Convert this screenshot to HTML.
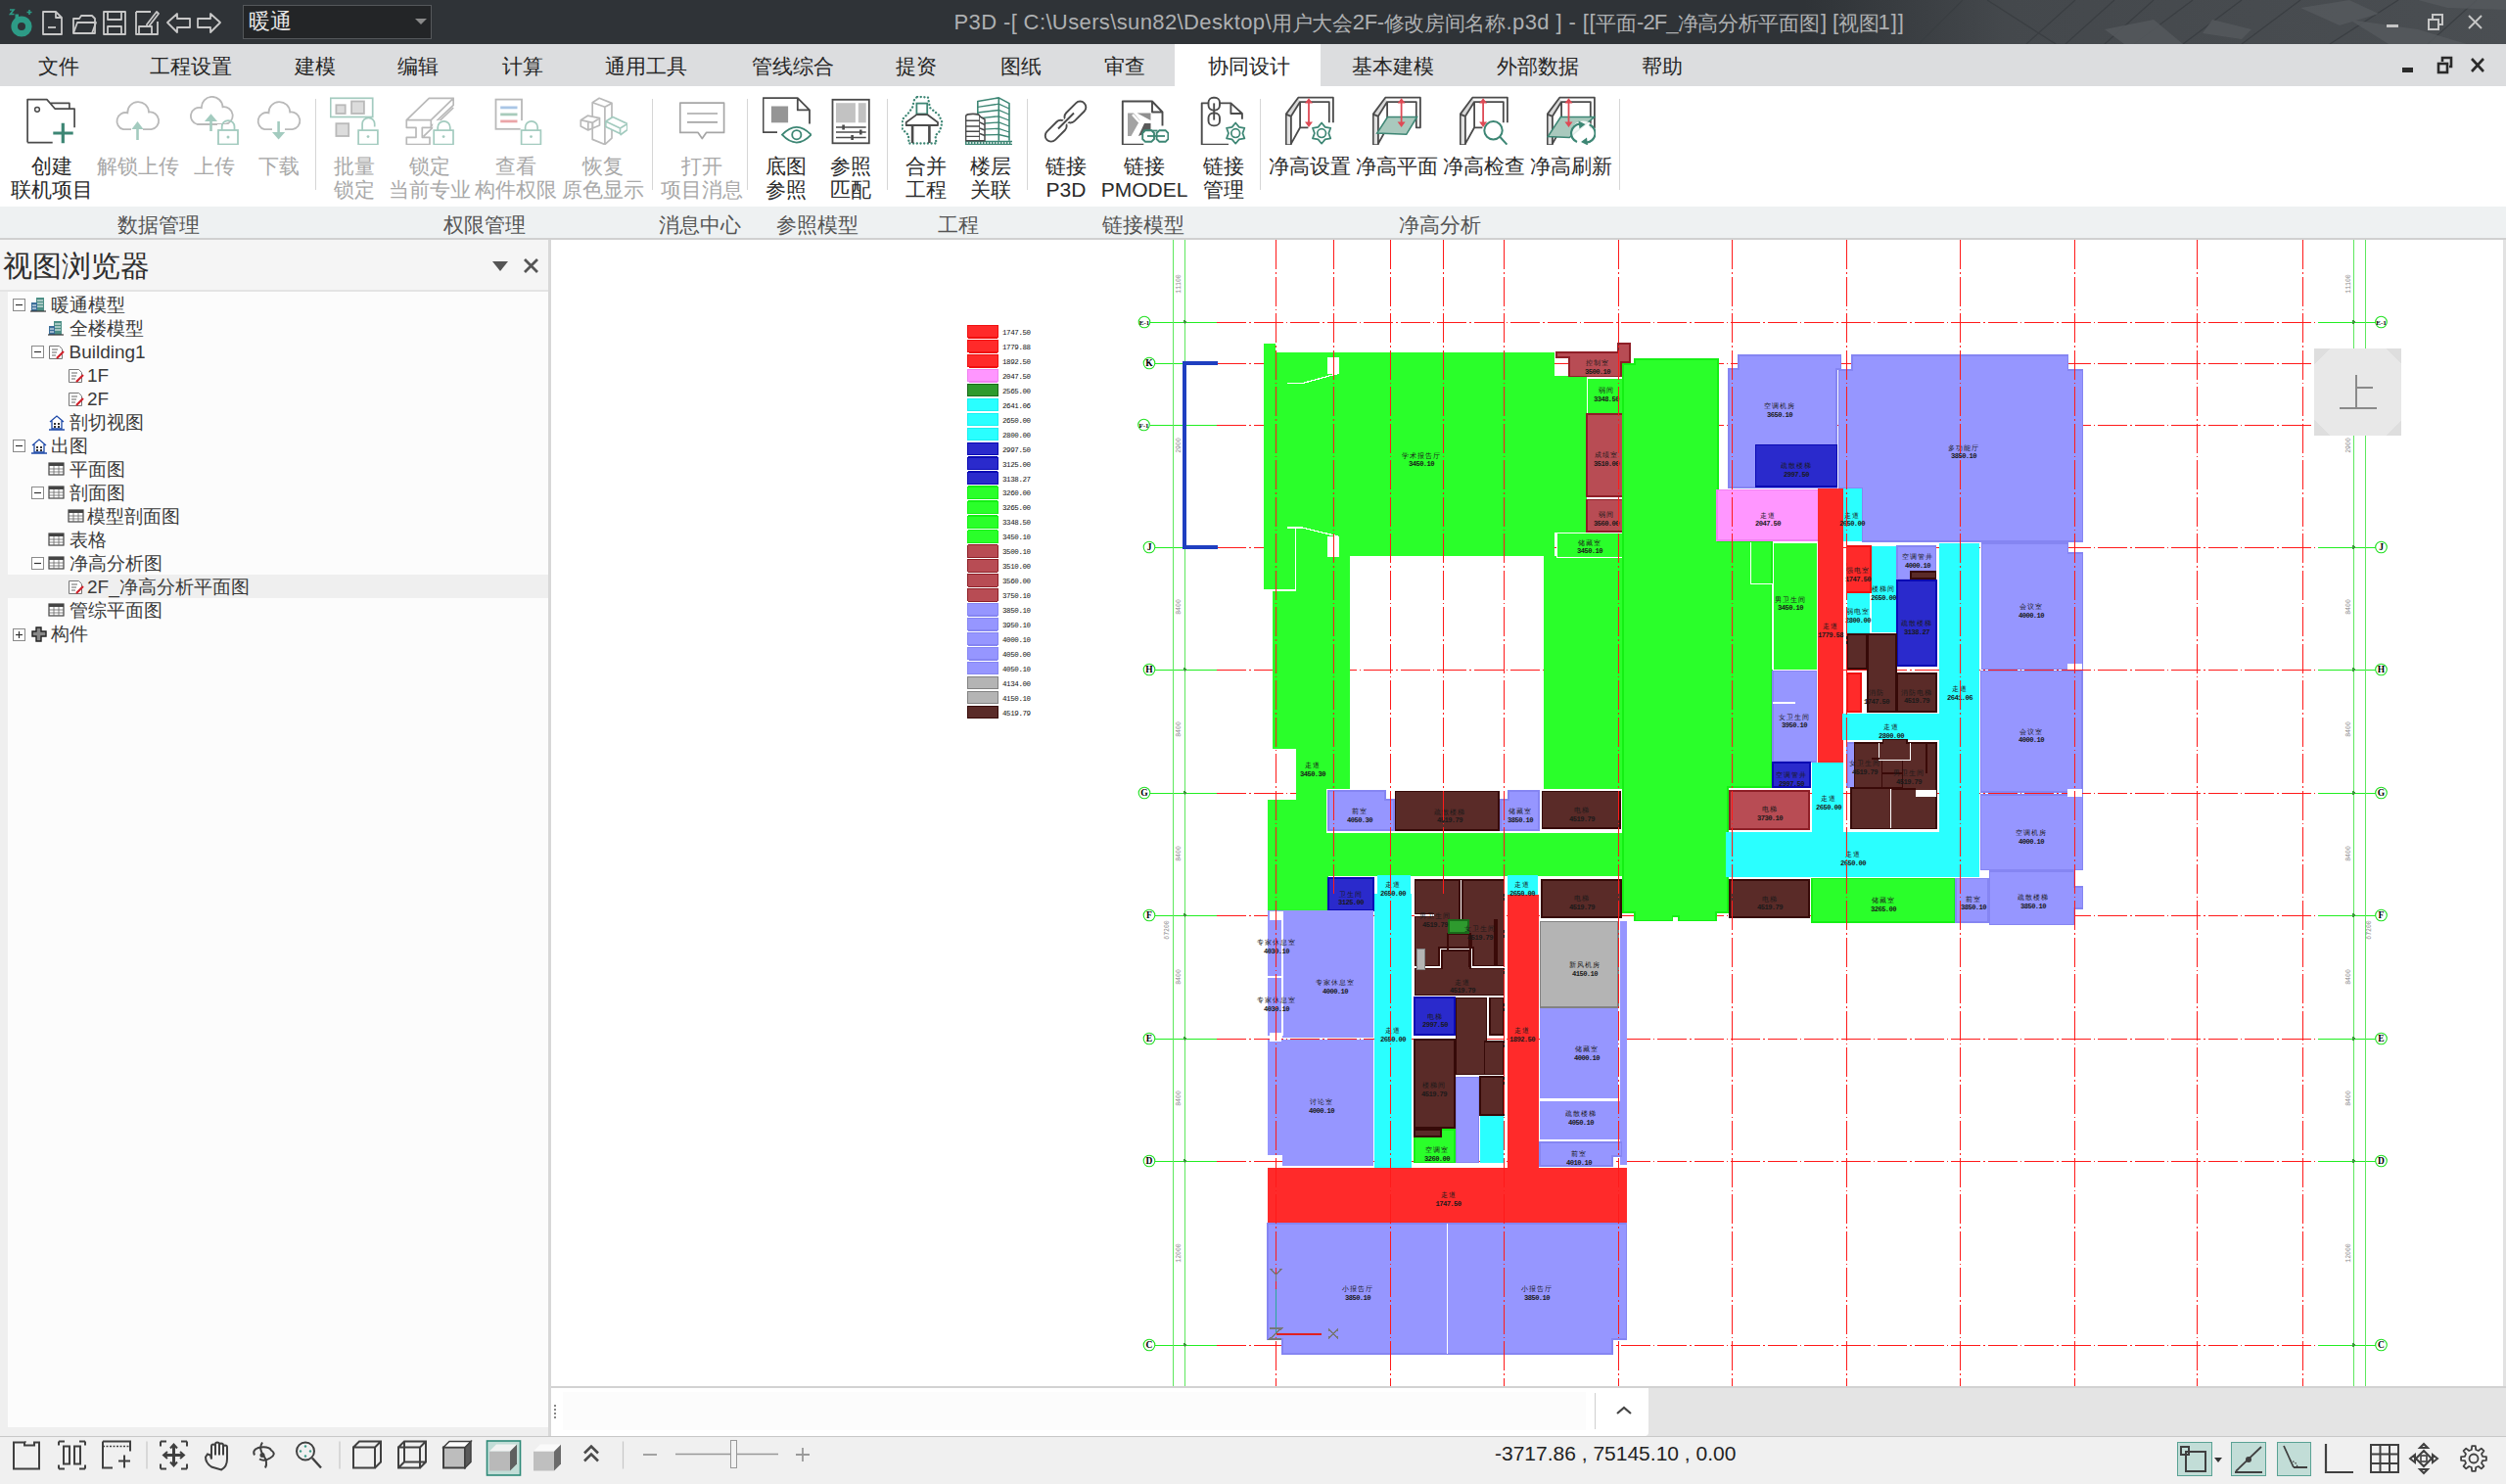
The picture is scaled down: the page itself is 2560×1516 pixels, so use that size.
<!DOCTYPE html><html><head><meta charset="utf-8"><style>
*{margin:0;padding:0;box-sizing:border-box}
html,body{width:2560px;height:1516px;overflow:hidden;background:#fff;font-family:"Liberation Sans",sans-serif}
.abs{position:absolute}
#title{left:0;top:0;width:2560px;height:45px;background:#2f3337;overflow:hidden}
#menu{left:0;top:45px;width:2560px;height:43px;background:#dcdddf}
.mi{position:absolute;top:1px;height:43px;line-height:43px;font-size:21px;color:#262626;white-space:nowrap}
#ribbon{left:0;top:88px;width:2560px;height:123px;background:#fff}
#glabels{left:0;top:211px;width:2560px;height:34px;background:#eef1f2;border-bottom:2px solid #d0d0d0}
.gl{position:absolute;top:7px;font-size:21px;line-height:24px;color:#555;white-space:nowrap}
.rb{position:absolute;top:70px;font-size:21px;line-height:24px;color:#2b2b2b;text-align:center;white-space:nowrap}
.rb.dis{color:#a9a9a9}
.ico{position:absolute;top:10px}
.sep{position:absolute;top:13px;width:1px;height:93px;background:#d6d6d6}
#left{left:0;top:245px;width:560px;height:1223px;background:#efefef}
#lhead{left:0;top:0;width:560px;height:53px;background:#f5f5f5;border-bottom:2px solid #e4e4e4}
#tree{left:8px;top:53px;width:552px;height:1160px;background:#fcfcfc}
.tr{position:absolute;height:24px;line-height:24px;font-size:19px;color:#3a3a3a;white-space:nowrap}
#split{left:560px;top:245px;width:3px;height:1223px;background:#d8d8d8}
#canvas{left:563px;top:245px;width:1995px;height:1171px;background:#fff;overflow:hidden}
#cmd{left:563px;top:1416px;width:1997px;height:52px;background:#e6e6e6;border-top:2px solid #d0d0d0}
#status{left:0;top:1467px;width:2560px;height:49px;background:#f0f0f0;border-top:1px solid #c8c8c8}
.st{position:absolute;top:4px}
</style></head><body>
<div id="title" class="abs">
<svg class="abs" style="left:0;top:0" width="2560" height="45" viewBox="0 0 2560 45">
<defs><linearGradient id="tg" x1="0" x2="1" y1="0" y2="0">
<stop offset="0" stop-color="#2f3337"/><stop offset="0.72" stop-color="#2f3337"/><stop offset="0.8" stop-color="#44484c"/><stop offset="1" stop-color="#4a4e52"/></linearGradient></defs>
<rect x="0" y="0" width="2560" height="45" fill="url(#tg)"/>
<g stroke="#3a3e42" stroke-width="1.2" fill="none">
<line x1="2005" y1="0" x2="1960" y2="45"/><line x1="2030" y1="0" x2="2100" y2="45"/>
<line x1="2120" y1="0" x2="2070" y2="45"/><line x1="2160" y1="0" x2="2110" y2="45"/>
<line x1="2200" y1="0" x2="2150" y2="45"/><line x1="2240" y1="0" x2="2180" y2="45"/>
<line x1="2290" y1="0" x2="2230" y2="45"/><line x1="2350" y1="0" x2="2290" y2="45"/>
<line x1="2450" y1="0" x2="2380" y2="45"/><line x1="2530" y1="0" x2="2480" y2="45"/>
</g>
<g fill="#55595d" opacity="0.85">
<polygon points="2350,8 2400,0 2430,14 2390,26"/><polygon points="2400,20 2470,30 2520,45 2440,45"/>
<polygon points="2260,20 2300,30 2290,40 2250,34"/><polygon points="2470,0 2560,0 2560,10 2500,8"/>
<polygon points="2150,30 2200,20 2230,45 2170,45"/>
</g>
<g fill="#c6c6c6">
<rect x="2438" y="25" width="12" height="3"/>
</g>
<g stroke="#c6c6c6" stroke-width="2" fill="none">
<rect x="2481" y="20" width="10" height="10"/><polyline points="2485,19 2485,15 2495,15 2495,25 2492,25"/>
<line x1="2522" y1="16" x2="2535" y2="29"/><line x1="2535" y1="16" x2="2522" y2="29"/>
</g>
</svg>
<svg class="abs" style="left:0;top:0" width="240" height="45" viewBox="0 0 240 45">
<circle cx="22" cy="27" r="7.3" fill="none" stroke="#2d9b86" stroke-width="6.6"/>
<rect x="15.5" y="14.5" width="3.5" height="5" fill="#2d9b86"/>
<path d="M10 10h4l-3.5 4.5h4" fill="none" stroke="#2d9b86" stroke-width="1.6"/>
<path d="M27.5 12.5h5M30 10v5" stroke="#2d9b86" stroke-width="1.6"/>
<g stroke="#c8c8c8" stroke-width="1.8" fill="none" stroke-linejoin="round">
<path d="M44 12h13l6 6v17H44z"/><path d="M57 12v6h6"/><path d="M49 28h8"/>
<path d="M75 19h6l2-3h11l3 3v15H75z"/><path d="M75 34l4-11h19l-4 11"/>
<rect x="106" y="12" width="22" height="23"/><rect x="110" y="12" width="14" height="8"/><rect x="110" y="27" width="14" height="8"/>
<path d="M139 12h15M139 12v23h22V22"/><rect x="142" y="27" width="13" height="8"/><path d="M150 25l10-13 2 2-10 13h-2z"/>
<path d="M171 23l10-9v5h13v9h-13v5z"/>
<path d="M225 23l-10-9v5h-13v9h13v5z"/>
</g></svg>
<div class="abs" style="left:248px;top:5px;width:193px;height:35px;background:#232527;border:1px solid #55585b"></div>
<div class="abs" style="left:254px;top:7px;font-size:22px;line-height:30px;color:#e8e8e8">暖通</div>
<svg class="abs" style="left:424px;top:19px" width="12" height="8"><polygon points="0,0 12,0 6,6" fill="#8a8a8a"/></svg>
<div class="abs" style="left:974.5px;top:9px;font-size:22px;line-height:28px;color:#aeb0b2;white-space:pre;letter-spacing:0.38px">P3D -[ C:\Users\sun82\Desktop\</div>
<div class="abs" style="left:1299px;top:9.5px;font-size:21px;line-height:28px;color:#aeb0b2;white-space:pre;letter-spacing:-0.3px">用户大会</div>
<div class="abs" style="left:1381.8px;top:9px;font-size:22px;line-height:28px;color:#aeb0b2;white-space:pre;letter-spacing:-0.4px">2F-</div>
<div class="abs" style="left:1413.6px;top:9.5px;font-size:21px;line-height:28px;color:#aeb0b2;white-space:pre;letter-spacing:-0.3px">修改房间名称</div>
<div class="abs" style="left:1538.5px;top:9px;font-size:22px;line-height:28px;color:#aeb0b2;white-space:pre;letter-spacing:0.42px">.p3d ] - [[</div>
<div class="abs" style="left:1630px;top:9.5px;font-size:21px;line-height:28px;color:#aeb0b2;white-space:pre;letter-spacing:-0.3px">平面</div>
<div class="abs" style="left:1672px;top:9px;font-size:22px;line-height:28px;color:#aeb0b2;white-space:pre;letter-spacing:-0.9px">-2F_</div>
<div class="abs" style="left:1713.6px;top:9.5px;font-size:21px;line-height:28px;color:#aeb0b2;white-space:pre;letter-spacing:-0.3px">净高分析平面图</div>
<div class="abs" style="left:1860px;top:9px;font-size:22px;line-height:28px;color:#aeb0b2;white-space:pre;letter-spacing:-0.1px">] [</div>
<div class="abs" style="left:1878px;top:9.5px;font-size:21px;line-height:28px;color:#aeb0b2;white-space:pre;letter-spacing:-0.3px">视图</div>
<div class="abs" style="left:1918.5px;top:9px;font-size:22px;line-height:28px;color:#aeb0b2;white-space:pre;letter-spacing:1.0px">1]]</div>
</div>
<div id="menu" class="abs">
<div class="abs" style="left:1200px;top:0;width:149px;height:43px;background:#fff"></div>
<div class="mi" style="left:39px">文件</div>
<div class="mi" style="left:153px">工程设置</div>
<div class="mi" style="left:301px">建模</div>
<div class="mi" style="left:406px">编辑</div>
<div class="mi" style="left:513px">计算</div>
<div class="mi" style="left:618px">通用工具</div>
<div class="mi" style="left:768px">管线综合</div>
<div class="mi" style="left:915px">提资</div>
<div class="mi" style="left:1022px">图纸</div>
<div class="mi" style="left:1128px">审查</div>
<div class="mi" style="left:1234px">协同设计</div>
<div class="mi" style="left:1381px">基本建模</div>
<div class="mi" style="left:1529px">外部数据</div>
<div class="mi" style="left:1677px">帮助</div>
<svg class="abs" style="left:2440px;top:0" width="120" height="43">
<rect x="14" y="24" width="11" height="5" fill="#2a2a2a"/>
<g stroke="#2a2a2a" stroke-width="2.6" fill="none"><rect x="51" y="20" width="9" height="9"/><polyline points="55,18 55,14 64,14 64,23 62,23"/>
<line x1="85" y1="15" x2="97" y2="28"/><line x1="97" y1="15" x2="85" y2="28"/></g></svg>
</div>
<div id="ribbon" class="abs">
<svg class="ico" style="left:27px" width="50" height="50" viewBox="0 0 50 50"><path d="M1.1 47.6V3.6H20.9L29.3 13.2H49.1V32.3M1.1 47.6H26.7M24.8 7.4H43.9V12.5" fill="none" stroke="#4b4b4b" stroke-width="1.7" stroke-linejoin="round"/><circle cx="11" cy="13.8" r="2.4" fill="none" stroke="#4b4b4b" stroke-width="1.5"/><path d="M27.3 38H47.7M37.3 27.8V48.3" stroke="#3d8674" stroke-width="3.2"/></svg>
<svg class="ico" style="left:115px" width="50" height="50" viewBox="0 0 50 50"><path transform="translate(0,0)" d="M11 34.2A8.6 8.6 0 0 1 15.3 17.3A10.8 10.8 0 0 1 37 16.5A8.8 8.8 0 0 1 39.5 34.2Z" fill="none" stroke="#b9b9b9" stroke-width="1.8"/><rect x="19" y="33" width="12" height="3" fill="#fff"/><path d="M25.5 45V32" stroke="#a3cbbf" stroke-width="2.6"/><path d="M19.5 34L25.5 26L31.5 34z" fill="#a3cbbf"/></svg>
<svg class="ico" style="left:194px" width="50" height="50" viewBox="0 0 50 50"><path transform="translate(-3.5,-5.2)" d="M11 34.2A8.6 8.6 0 0 1 15.3 17.3A10.8 10.8 0 0 1 37 16.5A8.8 8.8 0 0 1 39.5 34.2Z" fill="none" stroke="#b9b9b9" stroke-width="1.8"/><path d="M21.5 36V24" stroke="#a3cbbf" stroke-width="2.6"/><path d="M15 26L21.5 18.3L28 26z" fill="#a3cbbf"/><rect x="28" y="29" width="22" height="21" fill="#fff"/><rect x="29" y="35" width="20" height="14.5" fill="none" stroke="#a3cbbf" stroke-width="1.8"/><path d="M32.7 35v-3.5a6.4 6.4 0 0 1 12.8 0v3.5" fill="none" stroke="#a3cbbf" stroke-width="1.8"/><circle cx="39" cy="42" r="1.5" fill="#a3cbbf"/></svg>
<svg class="ico" style="left:260.4px" width="50" height="50" viewBox="0 0 50 50"><path transform="translate(-0.8,0)" d="M11 34.2A8.6 8.6 0 0 1 15.3 17.3A10.8 10.8 0 0 1 37 16.5A8.8 8.8 0 0 1 39.5 34.2Z" fill="none" stroke="#b9b9b9" stroke-width="1.8"/><rect x="18" y="33" width="13" height="3" fill="#fff"/><path d="M24.6 26V38" stroke="#a3cbbf" stroke-width="2.6"/><path d="M18 37L24.6 44.4L31.2 37z" fill="#a3cbbf"/></svg>
<svg class="ico" style="left:337px" width="50" height="50" viewBox="0 0 50 50"><rect x="0.7" y="2.3" width="43" height="19.2" fill="none" stroke="#a3cbbf" stroke-width="1.7"/><rect x="6.4" y="9.3" width="9.3" height="8.7" fill="#dcdcdc" stroke="#b9b9b9" stroke-width="1.8"/><rect x="22.1" y="5.5" width="12.8" height="12.5" fill="#dcdcdc" stroke="#b9b9b9" stroke-width="1.8"/><rect x="6.4" y="28.2" width="12.8" height="12.8" fill="#dcdcdc" stroke="#b9b9b9" stroke-width="1.8"/><rect x="28.1" y="25.1" width="22" height="25" fill="#fff"/><rect x="29.1" y="35.1" width="19.8" height="14.5" fill="#fff" stroke="#a3cbbf" stroke-width="1.7"/><path d="M33.1 35.1v-6.5a6.3 6.3 0 0 1 12.6 0v3" fill="none" stroke="#a3cbbf" stroke-width="1.7"/><circle cx="39.0" cy="41.6" r="1.4" fill="#a3cbbf"/></svg>
<svg class="ico" style="left:413.6px" width="50" height="50" viewBox="0 0 50 50"><path d="M1.3 24.7L24.3 2.3H49.2L26.3 24.7z M26.3 24.7L49.2 2.3V9.3L26.3 31z M1.3 24.7H26.3V32.3H17.3V42.3H25V49.6H1.3V42.3H11V32.3H1.3z M18.6 41.3L49.2 12" fill="#fff" stroke="#b9b9b9" stroke-width="1.7" stroke-linejoin="round"/><rect x="28.2" y="25.1" width="22" height="25" fill="#fff"/><rect x="29.2" y="35.1" width="19.8" height="14.5" fill="#fff" stroke="#a3cbbf" stroke-width="1.7"/><path d="M33.2 35.1v-3a6.3 6.3 0 0 1 12.6 0v3" fill="none" stroke="#a3cbbf" stroke-width="1.7"/><circle cx="39.1" cy="41.6" r="1.4" fill="#a3cbbf"/></svg>
<svg class="ico" style="left:503.5px" width="50" height="50" viewBox="0 0 50 50"><rect x="2.5" y="3.6" width="26.5" height="30.2" fill="none" stroke="#b9b9b9" stroke-width="1.8"/><path d="M7.2 11.9h17.3" stroke="#a9c6e6" stroke-width="2.8"/><path d="M7.2 18.9h17.3" stroke="#a8cbbb" stroke-width="2.8"/><path d="M7.2 25.9h17.3" stroke="#eba5a8" stroke-width="2.8"/><rect x="27.6" y="25.1" width="22" height="25" fill="#fff"/><rect x="28.6" y="35.1" width="19.8" height="14.5" fill="#fff" stroke="#a3cbbf" stroke-width="1.7"/><path d="M32.6 35.1v-3a6.3 6.3 0 0 1 12.6 0v3" fill="none" stroke="#a3cbbf" stroke-width="1.7"/><circle cx="38.5" cy="41.6" r="1.4" fill="#a3cbbf"/></svg>
<svg class="ico" style="left:591px" width="50" height="50" viewBox="0 0 50 50"><path d="M14.2 6.8L21.2 2.3L34 7.4L26.9 11.2z M14.2 6.8V44.4L26.9 49.6V11.2 M34 7.4V43.2L26.9 49.6" fill="#fff" stroke="#b9b9b9" stroke-width="1.7" stroke-linejoin="round"/><path d="M2.3 24.7L9.3 20.2L21.5 22.7L14.5 27.3z M2.3 24.7V31L9.8 34.9V27.3 M14.5 27.3V33L21.5 30V22.7 M9.8 34.9L14.5 33" fill="#fff" stroke="#b9b9b9" stroke-width="1.7" stroke-linejoin="round"/><path d="M27.8 26L35 21.5L49.9 28.5L42.5 33z M27.8 26V31.5L42.5 38.5V33 M49.9 28.5V34.5L42.5 40" fill="#fff" stroke="#a3cbbf" stroke-width="1.7" stroke-linejoin="round"/></svg>
<svg class="ico" style="left:691.6px" width="50" height="50" viewBox="0 0 50 50"><path d="M2.8 7.2H47.6V37.4H29.5L25.3 43.6L21.1 37.4H2.8z" fill="none" stroke="#a6a6a6" stroke-width="1.7" stroke-linejoin="round"/><path d="M10 18H41M10 26.8H41" stroke="#a6a6a6" stroke-width="1.7"/></svg>
<svg class="ico" style="left:778.5px" width="50" height="50" viewBox="0 0 50 50"><path d="M15 37.1H0.6V2.2H35.8L48 14.4V28.5M35.8 2.2V14.4H48" fill="none" stroke="#4b4b4b" stroke-width="1.8" stroke-linejoin="round"/><rect x="8.9" y="10.5" width="17.2" height="16.8" fill="#959595"/><path d="M20 39.7Q34.8 24 49.6 39.7Q34.8 55.4 20 39.7z" fill="#fff" stroke="#3d8674" stroke-width="1.8"/><circle cx="34.8" cy="39.7" r="4.6" fill="none" stroke="#3d8674" stroke-width="1.8"/></svg>
<svg class="ico" style="left:846.5px" width="50" height="50" viewBox="0 0 50 50"><rect x="3.5" y="3.8" width="37.3" height="44.5" fill="none" stroke="#4b4b4b" stroke-width="1.8"/><rect x="7" y="7.2" width="19.9" height="20.1" fill="#c2c2c2"/><rect x="29.8" y="7.2" width="7.9" height="20.1" fill="#c2c2c2"/><path d="M7 32H37.7M7 37.1H37.7M7 42.6H37.7" stroke="#4b4b4b" stroke-width="1.5"/><path d="M14.6 29.5v5M32.3 34.6v5M23.6 40.1v5" stroke="#4b4b4b" stroke-width="2.6"/></svg>
<svg class="ico" style="left:921px" width="50" height="50" viewBox="0 0 50 50"><path d="M16 0.8L27 1.5L29 12L38 19.5L41.5 27L39 36L34.5 40.5L35.5 48.5H7.5L7 40L0.8 34L0.8 24L7 17.5L11 12L13 4z" fill="none" stroke="#3d8674" stroke-width="2.3" stroke-dasharray="0.1 3.6" stroke-linecap="round"/><rect x="15.4" y="7.6" width="10.8" height="10.8" fill="#fff" stroke="#3d8674" stroke-width="1.8"/><path d="M4.7 30V27L15.4 19.1H26.2L37 27V30z" fill="#fff" stroke="#4b4b4b" stroke-width="1.8" stroke-linejoin="round"/><path d="M11.1 30.6V47.9M28.4 30.6V47.9" stroke="#4b4b4b" stroke-width="2.6"/></svg>
<svg class="ico" style="left:986.4px" width="50" height="50" viewBox="0 0 50 50"><path d="M12.8 45.7V5.5L34.3 1.9L45 7.6V45.7M34.3 1.9V45.7" fill="none" stroke="#3d8674" stroke-width="1.6" stroke-linejoin="round"/><path d="M12.8 11.3L34.3 8.2L45 13M12.8 17L34.3 14.5L45 19M12.8 22.8L34.3 20.8L45 25M12.8 28.5L34.3 27L45 31M12.8 34.3L34.3 33.3L45 37M12.8 40L34.3 39.5L45 42" fill="none" stroke="#3d8674" stroke-width="1.3"/><path d="M-1 46.5H48M-1 49.5H48" stroke="#3d8674" stroke-width="1.6"/><path d="M0 48H48" stroke="#3d8674" stroke-width="2.2" stroke-dasharray="1.4 1.6"/><path d="M0.6 45.7V21Q0.6 18.4 8 18.4Q15 18.4 15 21V45.7z" fill="#fff" stroke="#4b4b4b" stroke-width="1.6"/><path d="M15 21L20 24V45.7H15" fill="#fff" stroke="#4b4b4b" stroke-width="1.5"/><path d="M0.6 25.3H15M0.6 31H15M0.6 36.3H15M0.6 41.4H15M15 27l5 2.5M15 33l5 2M15 38.5l5 2" stroke="#4b4b4b" stroke-width="1.4"/></svg>
<svg class="ico" style="left:1064px" width="50" height="50" viewBox="0 0 50 50"><g fill="none" stroke="#4b4b4b" stroke-width="1.9"><rect x="-13" y="-6" width="26" height="12" rx="6" transform="translate(34.4 16.5) rotate(-45)"/><rect x="-13" y="-6" width="26" height="12" rx="6" transform="translate(14.7 35.7) rotate(-45)"/></g><path d="M15.5 35L34 16.8" stroke="#fff" stroke-width="5"/><path d="M17 33.5L33 17.5" stroke="#4b4b4b" stroke-width="1.9"/></svg>
<svg class="ico" style="left:1144px" width="50" height="50" viewBox="0 0 50 50"><path d="M24.3 49.6H2.8V5.5H33L43.5 16.5V30.4M33 5.5V16.5H43.5" fill="none" stroke="#4b4b4b" stroke-width="1.9" stroke-linejoin="round"/><polygon points="8,17.5 14,17.5 20.5,25 11.5,41 8,41" fill="#a3a3a3"/><polygon points="17.5,17.5 31.5,17.5 31.5,25" fill="#8f8f8f"/><polygon points="19,41 25,28 31.5,28 31.5,36" fill="#5a5a5a"/><path d="M13 19L22 29" stroke="#fff" stroke-width="2.5"/><path d="M23.5 35.5h15" stroke="#3d8674" stroke-width="1.8"/><g fill="#fff" stroke="#3d8674" stroke-width="1.9"><polygon points="26,35.2 32.2,35.2 35,38 35,44 32.2,46.8 26,46.8 23.2,44 23.2,38"/><polygon points="40.4,35.2 46.6,35.2 49.4,38 49.4,44 46.6,46.8 40.4,46.8 37.6,44 37.6,38"/></g><path d="M28 41h18" stroke="#3d8674" stroke-width="1.8"/></svg>
<svg class="ico" style="left:1225px" width="50" height="50" viewBox="0 0 50 50"><path d="M30 49.6H2.7V7.4H32.4L43.9 18V23.7M32.4 7.4V18H43.9" fill="none" stroke="#4b4b4b" stroke-width="1.9" stroke-linejoin="round"/><g fill="#fff" stroke="#4b4b4b" stroke-width="1.9"><rect x="9.5" y="1.7" width="11.5" height="12.9" rx="5"/><rect x="9.5" y="17.5" width="11.5" height="12.9" rx="5"/></g><path d="M15.2 7.4V24.6" stroke="#4b4b4b" stroke-width="1.9"/><circle cx="37.2" cy="38.1" r="12" fill="#fff"/><polygon points="37.20,27.50 40.80,31.86 46.38,32.80 44.40,38.10 46.38,43.40 40.80,44.34 37.20,48.70 33.60,44.34 28.02,43.40 30.00,38.10 28.02,32.80 33.60,31.86" fill="#fff" stroke="#3d8674" stroke-width="1.7" stroke-linejoin="round"/><circle cx="37.2" cy="38.1" r="4.4" fill="none" stroke="#3d8674" stroke-width="1.7"/></svg>
<svg class="ico" style="left:1313px" width="50" height="50" viewBox="0 0 50 50"><rect x="0.7" y="19" width="5.2" height="31" fill="#e2e2e2"/><path d="M13.2 1.7L0.7 18.6L5.9 20.8L15.1 6.1z" fill="#d8d8d8"/><path d="M0.7 50.2V18.6L13.2 1.7H48.9V27.2M0.7 50.2H5.9V20.8L15.1 6.1H44.8V27.2M15.1 6.1V32.3H23.4M5.9 48.9L15.1 32.3M0.7 18.6L5.9 20.8" fill="none" stroke="#4b4b4b" stroke-width="1.8" stroke-linejoin="round"/><path d="M24 5v24" stroke="#de4a55" stroke-width="1.8"/><path d="M20 7.5L24 2.3L28 7.5z M20 26.5L24 32L28 26.5z" fill="#de4a55"/><polygon points="37.10,27.50 40.70,31.86 46.28,32.80 44.30,38.10 46.28,43.40 40.70,44.34 37.10,48.70 33.50,44.34 27.92,43.40 29.90,38.10 27.92,32.80 33.50,31.86" fill="#fff" stroke="#3d8674" stroke-width="1.7" stroke-linejoin="round"/><circle cx="37.1" cy="38.1" r="4.4" fill="none" stroke="#3d8674" stroke-width="1.7"/></svg>
<svg class="ico" style="left:1402px" width="50" height="50" viewBox="0 0 50 50"><rect x="0.7" y="19" width="5.2" height="31" fill="#e2e2e2"/><path d="M13.2 1.7L0.7 18.6L5.9 20.8L15.1 6.1z" fill="#d8d8d8"/><path d="M0.7 50.2V18.6L13.2 1.7H48.9V27.2M0.7 50.2H5.9V20.8L15.1 6.1H44.8V27.2M15.1 6.1V32.3H23.4M5.9 48.9L15.1 32.3M0.7 18.6L5.9 20.8M44.8 27.2V32.3H48.9V27.2" fill="none" stroke="#4b4b4b" stroke-width="1.8" stroke-linejoin="round"/><path d="M4.7 38.1L15.5 21.5H45.5L34.7 39.3z" fill="#a9c9bd" stroke="#3d8674" stroke-width="1.6"/><path d="M29.6 5v24" stroke="#de4a55" stroke-width="1.8"/><path d="M25.6 7.5L29.6 2.3L33.6 7.5z M25.6 26.5L29.6 32L33.6 26.5z" fill="#de4a55"/></svg>
<svg class="ico" style="left:1491px" width="50" height="50" viewBox="0 0 50 50"><rect x="0.7" y="19" width="5.2" height="31" fill="#e2e2e2"/><path d="M13.2 1.7L0.7 18.6L5.9 20.8L15.1 6.1z" fill="#d8d8d8"/><path d="M0.7 50.2V18.6L13.2 1.7H48.9V27.2M0.7 50.2H5.9V20.8L15.1 6.1H44.8V27.2M15.1 6.1V32.3H23.4M5.9 48.9L15.1 32.3M0.7 18.6L5.9 20.8" fill="none" stroke="#4b4b4b" stroke-width="1.8" stroke-linejoin="round"/><path d="M24.1 5v24" stroke="#de4a55" stroke-width="1.8"/><path d="M20.1 7.5L24.1 2.3L28.1 7.5z M20.1 26.5L24.1 32L28.1 26.5z" fill="#de4a55"/><circle cx="34.5" cy="35.2" r="9.2" fill="#fff" stroke="#3d8674" stroke-width="2"/><path d="M41.2 41.8L48.4 49.6" stroke="#3d8674" stroke-width="2"/></svg>
<svg class="ico" style="left:1580px" width="50" height="50" viewBox="0 0 50 50"><rect x="0.7" y="19" width="5.2" height="31" fill="#e2e2e2"/><path d="M13.2 1.7L0.7 18.6L5.9 20.8L15.1 6.1z" fill="#d8d8d8"/><path d="M0.7 50.2V18.6L13.2 1.7H48.9V27.2M0.7 50.2H5.9V20.8L15.1 6.1H44.8V27.2M15.1 6.1V32.3H23.4M5.9 48.9L15.1 32.3M0.7 18.6L5.9 20.8M44.8 27.2V32.3H48.9V27.2" fill="none" stroke="#4b4b4b" stroke-width="1.8" stroke-linejoin="round"/><path d="M1.2 41.6L14.3 21.5H48.8L23.2 42.5z" fill="#a9c9bd" stroke="#3d8674" stroke-width="1.6"/><path d="M22.5 5v24" stroke="#de4a55" stroke-width="1.8"/><path d="M18.5 7.5L22.5 2.3L26.5 7.5z M18.5 26.5L22.5 32L26.5 26.5z" fill="#de4a55"/><circle cx="37.3" cy="38.1" r="12.5" fill="#fff" opacity="0.85"/><path d="M31 47a9.5 9.5 0 0 1 3-18.3M43.6 29.3a9.5 9.5 0 0 1-3 18.3" fill="none" stroke="#3d8674" stroke-width="2.2"/><path d="M32.5 25.5l7 3.5-6 4.5z M42 50.5l-7-3.5 6-4.5z" fill="#3d8674"/></svg>
<div class="rb" style="left:-7.5px;width:120px">创建<br>联机项目</div>
<div class="rb dis" style="left:80.5px;width:120px">解锁上传</div>
<div class="rb dis" style="left:159px;width:120px">上传</div>
<div class="rb dis" style="left:225.39999999999998px;width:120px">下载</div>
<div class="rb dis" style="left:302px;width:120px">批量<br>锁定</div>
<div class="rb dis" style="left:378.5px;width:120px">锁定<br>当前专业</div>
<div class="rb dis" style="left:467px;width:120px">查看<br>构件权限</div>
<div class="rb dis" style="left:556px;width:120px">恢复<br>原色显示</div>
<div class="rb dis" style="left:657px;width:120px">打开<br>项目消息</div>
<div class="rb" style="left:742.5px;width:120px">底图<br>参照</div>
<div class="rb" style="left:808.5px;width:120px">参照<br>匹配</div>
<div class="rb" style="left:886px;width:120px">合并<br>工程</div>
<div class="rb" style="left:952px;width:120px">楼层<br>关联</div>
<div class="rb" style="left:1029px;width:120px">链接<br>P3D</div>
<div class="rb" style="left:1109px;width:120px">链接<br>PMODEL</div>
<div class="rb" style="left:1190px;width:120px">链接<br>管理</div>
<div class="rb" style="left:1278px;width:120px">净高设置</div>
<div class="rb" style="left:1367px;width:120px">净高平面</div>
<div class="rb" style="left:1456px;width:120px">净高检查</div>
<div class="rb" style="left:1545px;width:120px">净高刷新</div>
<div class="sep" style="left:322px"></div>
<div class="sep" style="left:666px"></div>
<div class="sep" style="left:763px"></div>
<div class="sep" style="left:906px"></div>
<div class="sep" style="left:1049px"></div>
<div class="sep" style="left:1287px"></div>
<div class="sep" style="left:1654px"></div>
</div>
<div id="glabels" class="abs">
<div class="gl" style="left:120px">数据管理</div>
<div class="gl" style="left:453px">权限管理</div>
<div class="gl" style="left:673px">消息中心</div>
<div class="gl" style="left:793px">参照模型</div>
<div class="gl" style="left:958px">工程</div>
<div class="gl" style="left:1126px">链接模型</div>
<div class="gl" style="left:1429px">净高分析</div>
</div>
<div id="left" class="abs">
<div id="lhead" class="abs"><div class="abs" style="left:3px;top:9px;font-size:30px;line-height:36px;color:#2e2e2e;white-space:nowrap">视图浏览器</div>
<svg class="abs" style="left:500px;top:18px" width="60" height="22"><polygon points="3,4 19,4 11,14" fill="#555"/><path d="M36 2l13 13M49 2l-13 13" stroke="#555" stroke-width="2.8"/></svg></div>
<div id="tree" class="abs">
<div class="abs" style="left:0;top:289px;width:552px;height:24px;background:#efefef"></div>
<svg class="abs" style="left:5px;top:7px" width="14" height="14"><rect x="0.5" y="0.5" width="12" height="12" fill="#fff" stroke="#8a8a8a" stroke-width="1"/><path d="M3 6.5h7" stroke="#333" stroke-width="1.2"/></svg>
<svg class="abs" style="left:23px;top:5px" width="16" height="16"><rect x="6" y="1" width="8" height="14" fill="#4d8f86"/><rect x="1" y="6" width="6" height="9" fill="#3c6f9a"/><path d="M7 4h6M7 7h6M7 10h6M2 9h4M2 12h4" stroke="#fff" stroke-width="1"/><path d="M0 15h16" stroke="#333" stroke-width="1.2"/></svg>
<div class="tr" style="left:43.7px;top:1.6px;font-family:"Liberation Serif",serif;color:#666666">暖通模型</div>
<svg class="abs" style="left:41px;top:29px" width="16" height="16"><rect x="6" y="1" width="8" height="14" fill="#4d8f86"/><rect x="1" y="6" width="6" height="9" fill="#3c6f9a"/><path d="M7 4h6M7 7h6M7 10h6M2 9h4M2 12h4" stroke="#fff" stroke-width="1"/><path d="M0 15h16" stroke="#333" stroke-width="1.2"/></svg>
<div class="tr" style="left:62.5px;top:25.6px;font-family:"Liberation Serif",serif;color:#666666">全楼模型</div>
<svg class="abs" style="left:24.3px;top:55px" width="14" height="14"><rect x="0.5" y="0.5" width="12" height="12" fill="#fff" stroke="#8a8a8a" stroke-width="1"/><path d="M3 6.5h7" stroke="#333" stroke-width="1.2"/></svg>
<svg class="abs" style="left:41px;top:53px" width="18" height="18"><path d="M1.5 2.5h10l3 3v10h-13z" fill="#fff" stroke="#777" stroke-width="1"/><path d="M4 6h6M4 9h5M4 12h4" stroke="#666" stroke-width="1"/><path d="M9 15l7-7" stroke="#d0202a" stroke-width="2.2"/></svg>
<div class="tr" style="left:62.5px;top:49.7px;font-family:"Liberation Sans",sans-serif;color:#222">Building1</div>
<svg class="abs" style="left:61px;top:77px" width="18" height="18"><path d="M1.5 2.5h10l3 3v10h-13z" fill="#fff" stroke="#777" stroke-width="1"/><path d="M4 6h6M4 9h5M4 12h4" stroke="#666" stroke-width="1"/><path d="M9 15l7-7" stroke="#d0202a" stroke-width="2.2"/></svg>
<div class="tr" style="left:81px;top:73.7px;font-family:"Liberation Sans",sans-serif;color:#222">1F</div>
<svg class="abs" style="left:61px;top:101px" width="18" height="18"><path d="M1.5 2.5h10l3 3v10h-13z" fill="#fff" stroke="#777" stroke-width="1"/><path d="M4 6h6M4 9h5M4 12h4" stroke="#666" stroke-width="1"/><path d="M9 15l7-7" stroke="#d0202a" stroke-width="2.2"/></svg>
<div class="tr" style="left:81px;top:97.7px;font-family:"Liberation Sans",sans-serif;color:#222">2F</div>
<svg class="abs" style="left:41px;top:125px" width="18" height="18"><path d="M2 8l7-6 7 6M4 7v8h10V7" fill="#fff" stroke="#1e4aa8" stroke-width="1.3"/><rect x="6" y="9" width="2" height="2" fill="#333"/><rect x="10" y="9" width="2" height="2" fill="#333"/><rect x="6" y="12" width="2" height="2" fill="#333"/><rect x="10" y="12" width="2" height="2" fill="#333"/><path d="M1 16h16" stroke="#1e4aa8" stroke-width="1.5"/></svg>
<div class="tr" style="left:62.5px;top:121.8px;font-family:"Liberation Serif",serif;color:#666666">剖切视图</div>
<svg class="abs" style="left:5px;top:151px" width="14" height="14"><rect x="0.5" y="0.5" width="12" height="12" fill="#fff" stroke="#8a8a8a" stroke-width="1"/><path d="M3 6.5h7" stroke="#333" stroke-width="1.2"/></svg>
<svg class="abs" style="left:23px;top:149px" width="18" height="18"><path d="M2 8l7-6 7 6M4 7v8h10V7" fill="#fff" stroke="#1e4aa8" stroke-width="1.3"/><rect x="6" y="9" width="2" height="2" fill="#333"/><rect x="10" y="9" width="2" height="2" fill="#333"/><rect x="6" y="12" width="2" height="2" fill="#333"/><rect x="10" y="12" width="2" height="2" fill="#333"/><path d="M1 16h16" stroke="#1e4aa8" stroke-width="1.5"/></svg>
<div class="tr" style="left:43.7px;top:145.8px;font-family:"Liberation Serif",serif;color:#666666">出图</div>
<svg class="abs" style="left:41px;top:173px" width="18" height="16"><rect x="1" y="2" width="15" height="12" fill="#fff" stroke="#444" stroke-width="1.2"/><rect x="1" y="2" width="15" height="3" fill="#444"/><path d="M1 8h15M1 11h15M6 5v9M11 5v9" stroke="#666" stroke-width="0.8"/></svg>
<div class="tr" style="left:62.5px;top:169.8px;font-family:"Liberation Serif",serif;color:#666666">平面图</div>
<svg class="abs" style="left:24.3px;top:199px" width="14" height="14"><rect x="0.5" y="0.5" width="12" height="12" fill="#fff" stroke="#8a8a8a" stroke-width="1"/><path d="M3 6.5h7" stroke="#333" stroke-width="1.2"/></svg>
<svg class="abs" style="left:41px;top:197px" width="18" height="16"><rect x="1" y="2" width="15" height="12" fill="#fff" stroke="#444" stroke-width="1.2"/><rect x="1" y="2" width="15" height="3" fill="#444"/><path d="M1 8h15M1 11h15M6 5v9M11 5v9" stroke="#666" stroke-width="0.8"/></svg>
<div class="tr" style="left:62.5px;top:193.8px;font-family:"Liberation Serif",serif;color:#666666">剖面图</div>
<svg class="abs" style="left:61px;top:221px" width="18" height="16"><rect x="1" y="2" width="15" height="12" fill="#fff" stroke="#444" stroke-width="1.2"/><rect x="1" y="2" width="15" height="3" fill="#444"/><path d="M1 8h15M1 11h15M6 5v9M11 5v9" stroke="#666" stroke-width="0.8"/></svg>
<div class="tr" style="left:81px;top:217.9px;font-family:"Liberation Serif",serif;color:#666666">模型剖面图</div>
<svg class="abs" style="left:41px;top:245px" width="18" height="16"><rect x="1" y="2" width="15" height="12" fill="#fff" stroke="#444" stroke-width="1.2"/><rect x="1" y="2" width="15" height="3" fill="#444"/><path d="M1 8h15M1 11h15M6 5v9M11 5v9" stroke="#666" stroke-width="0.8"/></svg>
<div class="tr" style="left:62.5px;top:241.9px;font-family:"Liberation Serif",serif;color:#666666">表格</div>
<svg class="abs" style="left:24.3px;top:271px" width="14" height="14"><rect x="0.5" y="0.5" width="12" height="12" fill="#fff" stroke="#8a8a8a" stroke-width="1"/><path d="M3 6.5h7" stroke="#333" stroke-width="1.2"/></svg>
<svg class="abs" style="left:41px;top:269px" width="18" height="16"><rect x="1" y="2" width="15" height="12" fill="#fff" stroke="#444" stroke-width="1.2"/><rect x="1" y="2" width="15" height="3" fill="#444"/><path d="M1 8h15M1 11h15M6 5v9M11 5v9" stroke="#666" stroke-width="0.8"/></svg>
<div class="tr" style="left:62.5px;top:265.9px;font-family:"Liberation Serif",serif;color:#666666">净高分析图</div>
<svg class="abs" style="left:61px;top:293px" width="18" height="18"><path d="M1.5 2.5h10l3 3v10h-13z" fill="#fff" stroke="#777" stroke-width="1"/><path d="M4 6h6M4 9h5M4 12h4" stroke="#666" stroke-width="1"/><path d="M9 15l7-7" stroke="#d0202a" stroke-width="2.2"/></svg>
<div class="tr" style="left:81px;top:290.0px;font-family:"Liberation Sans",sans-serif;color:#222">2F_净高分析平面图</div>
<svg class="abs" style="left:41px;top:317px" width="18" height="16"><rect x="1" y="2" width="15" height="12" fill="#fff" stroke="#444" stroke-width="1.2"/><rect x="1" y="2" width="15" height="3" fill="#444"/><path d="M1 8h15M1 11h15M6 5v9M11 5v9" stroke="#666" stroke-width="0.8"/></svg>
<div class="tr" style="left:62.5px;top:314.0px;font-family:"Liberation Serif",serif;color:#666666">管综平面图</div>
<svg class="abs" style="left:5px;top:344px" width="14" height="14"><rect x="0.5" y="0.5" width="12" height="12" fill="#fff" stroke="#8a8a8a" stroke-width="1"/><path d="M3 6.5h7" stroke="#333" stroke-width="1.2"/><path d="M6.5 3v7" stroke="#333" stroke-width="1.2"/></svg>
<svg class="abs" style="left:23px;top:341px" width="18" height="18"><path d="M6 2h5v4h5v5h-5v5H6v-5H2V6h4z" fill="#888" stroke="#222" stroke-width="1.4"/></svg>
<div class="tr" style="left:43.7px;top:338.0px;font-family:"Liberation Serif",serif;color:#666666">构件</div>
</div></div>
<div id="split" class="abs"></div>
<div id="canvas" class="abs">
<svg class="abs" style="left:0;top:0" width="1995" height="1171" viewBox="563 245 1995 1171" shape-rendering="crispEdges">
<line x1="1243" y1="329" x2="2368" y2="329" stroke="#ff1a1a" stroke-width="1" stroke-dasharray="30 3 1.5 3"/>
<line x1="1175" y1="329" x2="1243" y2="329" stroke="#22ee22" stroke-width="1"/>
<line x1="2368" y1="329" x2="2427" y2="329" stroke="#22ee22" stroke-width="1"/>
<line x1="1243" y1="371" x2="2368" y2="371" stroke="#ff1a1a" stroke-width="1" stroke-dasharray="30 3 1.5 3"/>
<line x1="1180" y1="371" x2="1243" y2="371" stroke="#22ee22" stroke-width="1"/>
<line x1="2368" y1="371" x2="2427" y2="371" stroke="#22ee22" stroke-width="1"/>
<line x1="1243" y1="434" x2="2368" y2="434" stroke="#ff1a1a" stroke-width="1" stroke-dasharray="30 3 1.5 3"/>
<line x1="1174.5" y1="434" x2="1243" y2="434" stroke="#22ee22" stroke-width="1"/>
<line x1="2368" y1="434" x2="2427" y2="434" stroke="#22ee22" stroke-width="1"/>
<line x1="1243" y1="559" x2="2368" y2="559" stroke="#ff1a1a" stroke-width="1" stroke-dasharray="30 3 1.5 3"/>
<line x1="1180" y1="559" x2="1243" y2="559" stroke="#22ee22" stroke-width="1"/>
<line x1="2368" y1="559" x2="2427" y2="559" stroke="#22ee22" stroke-width="1"/>
<line x1="1243" y1="684" x2="2368" y2="684" stroke="#ff1a1a" stroke-width="1" stroke-dasharray="30 3 1.5 3"/>
<line x1="1180" y1="684" x2="1243" y2="684" stroke="#22ee22" stroke-width="1"/>
<line x1="2368" y1="684" x2="2427" y2="684" stroke="#22ee22" stroke-width="1"/>
<line x1="1243" y1="810" x2="2368" y2="810" stroke="#ff1a1a" stroke-width="1" stroke-dasharray="30 3 1.5 3"/>
<line x1="1175" y1="810" x2="1243" y2="810" stroke="#22ee22" stroke-width="1"/>
<line x1="2368" y1="810" x2="2427" y2="810" stroke="#22ee22" stroke-width="1"/>
<line x1="1243" y1="935" x2="2368" y2="935" stroke="#ff1a1a" stroke-width="1" stroke-dasharray="30 3 1.5 3"/>
<line x1="1180" y1="935" x2="1243" y2="935" stroke="#22ee22" stroke-width="1"/>
<line x1="2368" y1="935" x2="2427" y2="935" stroke="#22ee22" stroke-width="1"/>
<line x1="1243" y1="1061" x2="2368" y2="1061" stroke="#ff1a1a" stroke-width="1" stroke-dasharray="30 3 1.5 3"/>
<line x1="1180" y1="1061" x2="1243" y2="1061" stroke="#22ee22" stroke-width="1"/>
<line x1="2368" y1="1061" x2="2427" y2="1061" stroke="#22ee22" stroke-width="1"/>
<line x1="1243" y1="1186" x2="2368" y2="1186" stroke="#ff1a1a" stroke-width="1" stroke-dasharray="30 3 1.5 3"/>
<line x1="1180" y1="1186" x2="1243" y2="1186" stroke="#22ee22" stroke-width="1"/>
<line x1="2368" y1="1186" x2="2427" y2="1186" stroke="#22ee22" stroke-width="1"/>
<line x1="1243" y1="1374" x2="2368" y2="1374" stroke="#ff1a1a" stroke-width="1" stroke-dasharray="30 3 1.5 3"/>
<line x1="1180" y1="1374" x2="1243" y2="1374" stroke="#22ee22" stroke-width="1"/>
<line x1="2368" y1="1374" x2="2427" y2="1374" stroke="#22ee22" stroke-width="1"/>
<line x1="1198.7" y1="245" x2="1198.7" y2="1416" stroke="#5ee85e" stroke-width="1.2"/>
<line x1="1210.4" y1="245" x2="1210.4" y2="1416" stroke="#5ee85e" stroke-width="1.2"/>
<line x1="2404.3" y1="245" x2="2404.3" y2="1416" stroke="#5ee85e" stroke-width="1.2"/>
<line x1="2416.4" y1="245" x2="2416.4" y2="1416" stroke="#5ee85e" stroke-width="1.2"/>
<circle cx="1210.4" cy="329" r="1.8" fill="#3a9a3a"/><circle cx="2404.3" cy="329" r="1.8" fill="#3a9a3a"/>
<circle cx="1210.4" cy="371" r="1.8" fill="#3a9a3a"/><circle cx="2404.3" cy="371" r="1.8" fill="#3a9a3a"/>
<circle cx="1210.4" cy="434" r="1.8" fill="#3a9a3a"/><circle cx="2404.3" cy="434" r="1.8" fill="#3a9a3a"/>
<circle cx="1210.4" cy="559" r="1.8" fill="#3a9a3a"/><circle cx="2404.3" cy="559" r="1.8" fill="#3a9a3a"/>
<circle cx="1210.4" cy="684" r="1.8" fill="#3a9a3a"/><circle cx="2404.3" cy="684" r="1.8" fill="#3a9a3a"/>
<circle cx="1210.4" cy="810" r="1.8" fill="#3a9a3a"/><circle cx="2404.3" cy="810" r="1.8" fill="#3a9a3a"/>
<circle cx="1210.4" cy="935" r="1.8" fill="#3a9a3a"/><circle cx="2404.3" cy="935" r="1.8" fill="#3a9a3a"/>
<circle cx="1210.4" cy="1061" r="1.8" fill="#3a9a3a"/><circle cx="2404.3" cy="1061" r="1.8" fill="#3a9a3a"/>
<circle cx="1210.4" cy="1186" r="1.8" fill="#3a9a3a"/><circle cx="2404.3" cy="1186" r="1.8" fill="#3a9a3a"/>
<circle cx="1210.4" cy="1374" r="1.8" fill="#3a9a3a"/><circle cx="2404.3" cy="1374" r="1.8" fill="#3a9a3a"/>
<path d="M1244 371H1210V559H1244" fill="none" stroke="#1f3fc0" stroke-width="3.2"/>
<rect x="1291" y="351" width="12.0" height="252.0" fill="#2aff2a"/>
<rect x="1303" y="360" width="285.0" height="208.0" fill="#2aff2a"/>
<rect x="1291" y="568" width="32.0" height="35.0" fill="#2aff2a"/>
<rect x="1300" y="568" width="79.0" height="197.0" fill="#2aff2a"/>
<rect x="1324" y="765" width="55.0" height="52.0" fill="#2aff2a"/>
<rect x="1295" y="817" width="84.0" height="33.0" fill="#2aff2a"/>
<rect x="1295" y="850" width="363.0" height="45.0" fill="#2aff2a"/>
<rect x="1295" y="895" width="62.0" height="35.0" fill="#2aff2a"/>
<rect x="1355" y="806" width="2.0" height="44.0" fill="#2aff2a"/>
<rect x="1588" y="384" width="33.0" height="160.0" fill="#2aff2a"/>
<rect x="1577" y="568" width="81.0" height="238.0" fill="#2aff2a"/>
<rect x="1657" y="806" width="3.0" height="44.0" fill="#2aff2a"/>
<path d="M1356 365h12v17h-12zM1356 548h12v21h-12z" fill="#fff"/>
<path d="M1314.5 391.5h16l36.5-10" fill="none" stroke="#fff" stroke-width="1.3"/><path d="M1314.5 539h16l36.5 9M1323.7 539v64h-23" fill="none" stroke="#fff" stroke-width="1.3"/>
<path d="M1291 603h33" stroke="#fff" stroke-width="1.3"/>
<rect x="1621" y="386" width="36.0" height="36.0" fill="#2aff2a" stroke="#fff" stroke-width="1"/>
<rect x="1590" y="544" width="67.0" height="25.0" fill="#2aff2a" stroke="#fff" stroke-width="1"/>
<polygon points="1590,360 1653,360 1653,351 1665,351 1665,370 1656,370 1656,384.5 1603,384.5 1603,365 1590,365" fill="#b84c54" stroke="#8e1f27" stroke-width="1.2"/>
<rect x="1621" y="423" width="39.0" height="84.0" fill="#b84c54" stroke="#8e1f27" stroke-width="1.2"/>
<rect x="1621" y="510.5" width="37.0" height="32.5" fill="#b84c54" stroke="#8e1f27" stroke-width="1.2"/>
<rect x="1355" y="806" width="303.0" height="45.0" fill="#fff"/>
<polygon points="1357,808 1415,808 1415,817 1424,817 1424,848 1357,848" fill="#9696ff" stroke="#8585f2" stroke-width="1.2"/>
<rect x="1425.5" y="808.5" width="105.5" height="39.5" fill="#5a2b28" stroke="#360a08" stroke-width="1.4"/>
<polygon points="1541,808 1572,808 1572,848 1533,848 1533,817 1541,817" fill="#9696ff" stroke="#8585f2" stroke-width="1.2"/>
<rect x="1575.5" y="808.5" width="79.5" height="37.5" fill="#5a2b28" stroke="#360a08" stroke-width="1.4"/>
<rect x="1357" y="897" width="46.0" height="33.0" fill="#2a2acc" stroke="#0a0ab4" stroke-width="1.2"/>
<rect x="1406.5" y="893.5" width="34.5" height="20.5" fill="#2affff"/>
<rect x="1404.3" y="913.4" width="37.7" height="280.1" fill="#2affff"/>
<rect x="1540" y="893.5" width="31.0" height="20.5" fill="#2affff"/>
<rect x="1512" y="1139.5" width="24.0" height="48.0" fill="#2affff"/>
<rect x="1540" y="914" width="31.5" height="278.5" fill="#ff2a2a"/>
<rect x="1295" y="1192.5" width="366.5" height="56.5" fill="#ff2a2a"/>
<rect x="1295" y="930" width="107.5" height="129.5" fill="#9696ff"/>
<rect x="1295" y="1062" width="107.5" height="118.0" fill="#9696ff"/>
<rect x="1310" y="1180" width="92.5" height="10.5" fill="#9696ff"/>
<path d="M1310 931v127M1295 998h15M1295 1059h15" stroke="#fff" stroke-width="1.3"/>
<rect x="1297" y="1055" width="12" height="9" fill="#fff"/><rect x="1297" y="931" width="12" height="9" fill="#fff"/>
<rect x="1445.5" y="899" width="91.0" height="117.5" fill="#5a2b28" stroke="#360a08" stroke-width="1.6"/>
<path d="M1445 988H1471.5V969.5H1503.5V988H1537M1492.4 899V941M1445 935H1465M1527.8 939V987M1501.8 955V988" fill="none" stroke="#3a0a08" stroke-width="4.2"/>
<path d="M1445 988H1471.5V969.5H1503.5V988H1537M1492.4 899V941M1445 935H1465" fill="none" stroke="#fff" stroke-width="1.4"/>
<rect x="1479" y="954" width="22.8" height="16.6" fill="none" stroke="#3a0a08" stroke-width="1.6"/>
<rect x="1480" y="940" width="20.0" height="13.0" fill="#2e9a2e" stroke="#1a6a1a" stroke-width="1.2"/>
<rect x="1447" y="969" width="8.0" height="21.0" fill="#b4b4b4" stroke="#828282" stroke-width="1"/>
<rect x="1445" y="1019" width="41.0" height="38.0" fill="#2a2acc" stroke="#0a0ab4" stroke-width="1.2"/>
<rect x="1445" y="1062" width="41.0" height="90.0" fill="#5a2b28" stroke="#360a08" stroke-width="1.2"/>
<rect x="1487.5" y="1019.5" width="31.2" height="78.2" fill="#5a2b28" stroke="#360a08" stroke-width="1.2"/>
<rect x="1522" y="1019.5" width="14.0" height="37.5" fill="#5a2b28" stroke="#360a08" stroke-width="1.2"/>
<rect x="1516.7" y="1064" width="19.3" height="33.7" fill="#5a2b28" stroke="#360a08" stroke-width="1.2"/>
<rect x="1512" y="1100" width="24.0" height="39.0" fill="#5a2b28" stroke="#360a08" stroke-width="1.2"/>
<rect x="1445" y="1154" width="41.0" height="33.5" fill="#2aff2a" stroke="#14f014" stroke-width="1.2"/>
<rect x="1445" y="1154" width="27.0" height="7.0" fill="#5a2b28" stroke="#360a08" stroke-width="1.2"/>
<rect x="1487.5" y="1100.7" width="23.0" height="86.8" fill="#9696ff" stroke="#8585f2" stroke-width="1.2"/>
<rect x="1575" y="899" width="81.0" height="38.0" fill="#5a2b28" stroke="#360a08" stroke-width="1.4"/>
<rect x="1573.5" y="941.5" width="79.5" height="87.5" fill="#b4b4b4" stroke="#828282" stroke-width="1.6"/>
<rect x="1655" y="941" width="7.0" height="249.0" fill="#9696ff"/>
<rect x="1573" y="1030" width="80.0" height="92.0" fill="#9696ff"/>
<rect x="1573" y="1124.5" width="88.5" height="39.5" fill="#9696ff"/>
<polygon points="1573,1167 1656.5,1167 1656.5,1181 1647,1181 1647,1191 1573,1191" fill="#9696ff" stroke="#8585f2" stroke-width="1.2"/>
<polygon points="1295,1250 1661.5,1250 1661.5,1368 1647,1368 1647,1383 1310,1383 1310,1368 1295,1368" fill="#9696ff" stroke="#8585f2" stroke-width="1.2"/>
<path d="M1478.5 1250v133" stroke="#fff" stroke-width="1.5"/>
<polygon points="1670,367 1755,367 1755,553 1810,553 1810,804 1765,804 1765,932 1753,932 1753,940.5 1715,940.5 1715,936 1708.7,936 1708.7,940.5 1670,940.5 1670,932 1658,932 1658,372 1670,372" fill="#2aff2a" stroke="#14f014" stroke-width="1.2"/>
<path d="M1788.6 554V596.7H1810.8V684M1811 635.5h25" fill="none" stroke="#fff" stroke-width="1.3"/>
<rect x="1811" y="554" width="45.0" height="130.0" fill="#2aff2a" stroke="#fff" stroke-width="1"/>
<polygon points="1776,363 1880.5,363 1880.5,377 1876,377 1876,498 1766,498 1766,377 1776,377" fill="#9696ff" stroke="#8585f2" stroke-width="1.2"/>
<rect x="1793.6" y="454.5" width="82.9" height="42.5" fill="#2a2acc" stroke="#0a0ab4" stroke-width="1.2"/>
<polygon points="1892,363 2112.5,363 2112.5,378 2127.4,378 2127.4,553 1902.8,553 1902.8,498.7 1878.5,498.7 1878.5,378 1892,378" fill="#9696ff" stroke="#8585f2" stroke-width="1.2"/>
<rect x="1754" y="500.7" width="104.0" height="51.3" fill="#ff96ff" stroke="#f080f0" stroke-width="1.2"/>
<rect x="1857" y="499" width="26.0" height="280.0" fill="#ff2a2a"/>
<rect x="1882.5" y="498.7" width="19.5" height="54.3" fill="#2affff"/>
<rect x="1886.6" y="558" width="24.4" height="47.0" fill="#ff2a2a" stroke="#f01010" stroke-width="1.2"/>
<rect x="1887" y="606" width="23.0" height="41.0" fill="#2affff"/>
<rect x="1912" y="558" width="24.7" height="88.0" fill="#2affff"/>
<rect x="1938" y="558" width="39.5" height="33.6" fill="#9696ff" stroke="#8585f2" stroke-width="1.2"/>
<rect x="1952" y="584" width="25.5" height="7.0" fill="#5a2b28" stroke="#360a08" stroke-width="1.2"/>
<rect x="1938" y="593" width="40.0" height="87.0" fill="#2a2acc" stroke="#0a0ab4" stroke-width="1.2"/>
<rect x="1887" y="648" width="20.0" height="35.0" fill="#5a2b28" stroke="#360a08" stroke-width="1.2"/>
<rect x="1908" y="648" width="29.0" height="79.0" fill="#5a2b28" stroke="#360a08" stroke-width="1.2"/>
<rect x="1887" y="688" width="14.0" height="39.0" fill="#ff2a2a" stroke="#f01010" stroke-width="1.2"/>
<rect x="1938" y="688" width="40.0" height="39.0" fill="#5a2b28" stroke="#360a08" stroke-width="1.2"/>
<rect x="1882.3" y="729" width="98.7" height="27.3" fill="#2affff"/>
<rect x="1887" y="759" width="7.7" height="45.4" fill="#9696ff" stroke="#8585f2" stroke-width="1.2"/>
<polygon points="1894.7,759 1923.3,759 1923.3,755.4 1947.8,755.4 1947.8,759 1978,759 1978,846.4 1891.2,846.4 1891.2,805 1894.7,805" fill="#5a2b28" stroke="#360a08" stroke-width="1.5"/>
<path d="M1919.5 759V776.6H1951.5V759M1931.5 805V846.4" fill="none" stroke="#fff" stroke-width="1.3"/><rect x="1957.3" y="807.3" width="21" height="6.6" fill="#fff"/>
<path d="M1922.4 776.6V805H1943.6V776.6M1922.4 789.8H1943.6M1895 805H1930M1933 806H1957M1912 775H1920M1968 760V790" fill="none" stroke="#3a0a08" stroke-width="1.5"/>
<rect x="1811" y="685.6" width="44.6" height="92.4" fill="#9696ff" stroke="#8585f2" stroke-width="1.2"/>
<path d="M1811 718h23" stroke="#fff" stroke-width="1.3"/>
<rect x="1811" y="779" width="38.0" height="25.0" fill="#2a2acc" stroke="#0a0ab4" stroke-width="1.2"/>
<rect x="1851" y="779" width="32.0" height="71.0" fill="#2affff"/>
<rect x="1981" y="555" width="41.4" height="341.0" fill="#2affff"/>
<rect x="1763.4" y="850" width="259.0" height="45.7" fill="#2affff"/>
<rect x="1767" y="808" width="81.0" height="39.0" fill="#b84c54" stroke="#8e1f27" stroke-width="1.4"/>
<rect x="1767" y="899" width="81.0" height="38.0" fill="#5a2b28" stroke="#360a08" stroke-width="1.4"/>
<rect x="1851" y="897.5" width="145.5" height="44.5" fill="#2aff2a" stroke="#14f014" stroke-width="1.2"/>
<rect x="1998" y="897.5" width="33.0" height="44.5" fill="#9696ff" stroke="#8585f2" stroke-width="1.2"/>
<polygon points="2024.3,555 2112.5,555 2112.5,565 2127.4,565 2127.4,683.4 2024.3,683.4" fill="#9696ff" stroke="#8585f2" stroke-width="1.2"/>
<rect x="2023.5" y="685.5" width="103.5" height="123.5" fill="#9696ff" stroke="#8585f2" stroke-width="1.2"/>
<rect x="2023.7" y="812" width="103.9" height="76.5" fill="#9696ff" stroke="#8585f2" stroke-width="1.2"/>
<polygon points="2032.3,890 2119,890 2119,906 2127.6,906 2127.6,928 2119,928 2119,944.5 2032.3,944.5" fill="#9696ff" stroke="#8585f2" stroke-width="1.2"/>
<rect x="2112" y="678" width="15" height="6" fill="#fff"/><rect x="2112" y="806" width="15" height="8" fill="#fff"/>
<g font-size="7" text-anchor="middle" fill="#1a1a1a" shape-rendering="auto">
<text x="1452" y="467.7" font-family="Liberation Sans" letter-spacing="1">学术报告厅</text><text x="1452" y="476.2" font-family="Liberation Mono" font-size="7.2" font-weight="bold" letter-spacing="-0.6">3450.10</text>
<text x="1632" y="373" font-family="Liberation Sans" letter-spacing="1">控制室</text><text x="1632" y="381.5" font-family="Liberation Mono" font-size="7.2" font-weight="bold" letter-spacing="-0.6">3500.10</text>
<text x="1641" y="401" font-family="Liberation Sans" letter-spacing="1">弱间</text><text x="1641" y="409.5" font-family="Liberation Mono" font-size="7.2" font-weight="bold" letter-spacing="-0.6">3348.50</text>
<text x="1641" y="467" font-family="Liberation Sans" letter-spacing="1">成绩室</text><text x="1641" y="475.5" font-family="Liberation Mono" font-size="7.2" font-weight="bold" letter-spacing="-0.6">3510.00</text>
<text x="1641" y="528" font-family="Liberation Sans" letter-spacing="1">弱间</text><text x="1641" y="536.5" font-family="Liberation Mono" font-size="7.2" font-weight="bold" letter-spacing="-0.6">3560.00</text>
<text x="1624" y="556.5" font-family="Liberation Sans" letter-spacing="1">储藏室</text><text x="1624" y="565.0" font-family="Liberation Mono" font-size="7.2" font-weight="bold" letter-spacing="-0.6">3450.10</text>
<text x="1341" y="784" font-family="Liberation Sans" letter-spacing="1">走道</text><text x="1341" y="792.5" font-family="Liberation Mono" font-size="7.2" font-weight="bold" letter-spacing="-0.6">3450.30</text>
<text x="1389" y="831" font-family="Liberation Sans" letter-spacing="1">前室</text><text x="1389" y="839.5" font-family="Liberation Mono" font-size="7.2" font-weight="bold" letter-spacing="-0.6">4050.30</text>
<text x="1481" y="831.6" font-family="Liberation Sans" letter-spacing="1">疏散楼梯</text><text x="1481" y="840.1" font-family="Liberation Mono" font-size="7.2" font-weight="bold" letter-spacing="-0.6">4519.79</text>
<text x="1553" y="831" font-family="Liberation Sans" letter-spacing="1">储藏室</text><text x="1553" y="839.5" font-family="Liberation Mono" font-size="7.2" font-weight="bold" letter-spacing="-0.6">3850.10</text>
<text x="1616" y="830" font-family="Liberation Sans" letter-spacing="1">电梯</text><text x="1616" y="838.5" font-family="Liberation Mono" font-size="7.2" font-weight="bold" letter-spacing="-0.6">4519.79</text>
<text x="1380" y="915.8" font-family="Liberation Sans" letter-spacing="1">卫生间</text><text x="1380" y="924.3" font-family="Liberation Mono" font-size="7.2" font-weight="bold" letter-spacing="-0.6">3125.00</text>
<text x="1423" y="906" font-family="Liberation Sans" letter-spacing="1">走道</text><text x="1423" y="914.5" font-family="Liberation Mono" font-size="7.2" font-weight="bold" letter-spacing="-0.6">2650.00</text>
<text x="1555" y="906" font-family="Liberation Sans" letter-spacing="1">走道</text><text x="1555" y="914.5" font-family="Liberation Mono" font-size="7.2" font-weight="bold" letter-spacing="-0.6">2650.00</text>
<text x="1616" y="920" font-family="Liberation Sans" letter-spacing="1">电梯</text><text x="1616" y="928.5" font-family="Liberation Mono" font-size="7.2" font-weight="bold" letter-spacing="-0.6">4519.79</text>
<text x="1466" y="938" font-family="Liberation Sans" letter-spacing="1">男卫生间</text><text x="1466" y="946.5" font-family="Liberation Mono" font-size="7.2" font-weight="bold" letter-spacing="-0.6">4519.79</text>
<text x="1512" y="951" font-family="Liberation Sans" letter-spacing="1">女卫生间</text><text x="1512" y="959.5" font-family="Liberation Mono" font-size="7.2" font-weight="bold" letter-spacing="-0.6">4519.79</text>
<text x="1619" y="988" font-family="Liberation Sans" letter-spacing="1">新风机房</text><text x="1619" y="996.5" font-family="Liberation Mono" font-size="7.2" font-weight="bold" letter-spacing="-0.6">4150.10</text>
<text x="1494" y="1005.5" font-family="Liberation Sans" letter-spacing="1">走道</text><text x="1494" y="1014.0" font-family="Liberation Mono" font-size="7.2" font-weight="bold" letter-spacing="-0.6">4519.79</text>
<text x="1304" y="965" font-family="Liberation Sans" letter-spacing="1">专家休息室</text><text x="1304" y="973.5" font-family="Liberation Mono" font-size="7.2" font-weight="bold" letter-spacing="-0.6">4030.10</text>
<text x="1304" y="1024" font-family="Liberation Sans" letter-spacing="1">专家休息室</text><text x="1304" y="1032.5" font-family="Liberation Mono" font-size="7.2" font-weight="bold" letter-spacing="-0.6">4030.10</text>
<text x="1364" y="1006" font-family="Liberation Sans" letter-spacing="1">专家休息室</text><text x="1364" y="1014.5" font-family="Liberation Mono" font-size="7.2" font-weight="bold" letter-spacing="-0.6">4000.10</text>
<text x="1466" y="1040.5" font-family="Liberation Sans" letter-spacing="1">电梯</text><text x="1466" y="1049.0" font-family="Liberation Mono" font-size="7.2" font-weight="bold" letter-spacing="-0.6">2997.50</text>
<text x="1423" y="1055" font-family="Liberation Sans" letter-spacing="1">走道</text><text x="1423" y="1063.5" font-family="Liberation Mono" font-size="7.2" font-weight="bold" letter-spacing="-0.6">2650.00</text>
<text x="1555" y="1055" font-family="Liberation Sans" letter-spacing="1">走道</text><text x="1555" y="1063.5" font-family="Liberation Mono" font-size="7.2" font-weight="bold" letter-spacing="-0.6">1892.50</text>
<text x="1621" y="1074" font-family="Liberation Sans" letter-spacing="1">储藏室</text><text x="1621" y="1082.5" font-family="Liberation Mono" font-size="7.2" font-weight="bold" letter-spacing="-0.6">4000.10</text>
<text x="1465" y="1111" font-family="Liberation Sans" letter-spacing="1">楼梯间</text><text x="1465" y="1119.5" font-family="Liberation Mono" font-size="7.2" font-weight="bold" letter-spacing="-0.6">4519.79</text>
<text x="1350" y="1128" font-family="Liberation Sans" letter-spacing="1">讨论室</text><text x="1350" y="1136.5" font-family="Liberation Mono" font-size="7.2" font-weight="bold" letter-spacing="-0.6">4000.10</text>
<text x="1615" y="1140" font-family="Liberation Sans" letter-spacing="1">疏散楼梯</text><text x="1615" y="1148.5" font-family="Liberation Mono" font-size="7.2" font-weight="bold" letter-spacing="-0.6">4050.10</text>
<text x="1613" y="1181" font-family="Liberation Sans" letter-spacing="1">前室</text><text x="1613" y="1189.5" font-family="Liberation Mono" font-size="7.2" font-weight="bold" letter-spacing="-0.6">4010.10</text>
<text x="1468" y="1177" font-family="Liberation Sans" letter-spacing="1">空调室</text><text x="1468" y="1185.5" font-family="Liberation Mono" font-size="7.2" font-weight="bold" letter-spacing="-0.6">3260.00</text>
<text x="1479.5" y="1223" font-family="Liberation Sans" letter-spacing="1">走道</text><text x="1479.5" y="1231.5" font-family="Liberation Mono" font-size="7.2" font-weight="bold" letter-spacing="-0.6">1747.50</text>
<text x="1387" y="1319" font-family="Liberation Sans" letter-spacing="1">小报告厅</text><text x="1387" y="1327.5" font-family="Liberation Mono" font-size="7.2" font-weight="bold" letter-spacing="-0.6">3850.10</text>
<text x="1570" y="1319" font-family="Liberation Sans" letter-spacing="1">小报告厅</text><text x="1570" y="1327.5" font-family="Liberation Mono" font-size="7.2" font-weight="bold" letter-spacing="-0.6">3850.10</text>
<text x="1818" y="417" font-family="Liberation Sans" letter-spacing="1">空调机房</text><text x="1818" y="425.5" font-family="Liberation Mono" font-size="7.2" font-weight="bold" letter-spacing="-0.6">3650.10</text>
<text x="1835" y="478" font-family="Liberation Sans" letter-spacing="1">疏散楼梯</text><text x="1835" y="486.5" font-family="Liberation Mono" font-size="7.2" font-weight="bold" letter-spacing="-0.6">2997.50</text>
<text x="2006" y="459.5" font-family="Liberation Sans" letter-spacing="1">多功能厅</text><text x="2006" y="468.0" font-family="Liberation Mono" font-size="7.2" font-weight="bold" letter-spacing="-0.6">3850.10</text>
<text x="1806" y="528.5" font-family="Liberation Sans" letter-spacing="1">走道</text><text x="1806" y="537.0" font-family="Liberation Mono" font-size="7.2" font-weight="bold" letter-spacing="-0.6">2047.50</text>
<text x="1892" y="528.5" font-family="Liberation Sans" letter-spacing="1">走道</text><text x="1892" y="537.0" font-family="Liberation Mono" font-size="7.2" font-weight="bold" letter-spacing="-0.6">2650.00</text>
<text x="1898" y="585" font-family="Liberation Sans" letter-spacing="1">强电室</text><text x="1898" y="593.5" font-family="Liberation Mono" font-size="7.2" font-weight="bold" letter-spacing="-0.6">1747.50</text>
<text x="1959" y="571" font-family="Liberation Sans" letter-spacing="1">空调管井</text><text x="1959" y="579.5" font-family="Liberation Mono" font-size="7.2" font-weight="bold" letter-spacing="-0.6">4000.10</text>
<text x="1924" y="604" font-family="Liberation Sans" letter-spacing="1">楼梯间</text><text x="1924" y="612.5" font-family="Liberation Mono" font-size="7.2" font-weight="bold" letter-spacing="-0.6">2650.00</text>
<text x="1898" y="627" font-family="Liberation Sans" letter-spacing="1">弱电室</text><text x="1898" y="635.5" font-family="Liberation Mono" font-size="7.2" font-weight="bold" letter-spacing="-0.6">2800.00</text>
<text x="1958" y="639" font-family="Liberation Sans" letter-spacing="1">疏散楼梯</text><text x="1958" y="647.5" font-family="Liberation Mono" font-size="7.2" font-weight="bold" letter-spacing="-0.6">3138.27</text>
<text x="1829" y="614.5" font-family="Liberation Sans" letter-spacing="1">男卫生间</text><text x="1829" y="623.0" font-family="Liberation Mono" font-size="7.2" font-weight="bold" letter-spacing="-0.6">3450.10</text>
<text x="1870" y="642" font-family="Liberation Sans" letter-spacing="1">走道</text><text x="1870" y="650.5" font-family="Liberation Mono" font-size="7.2" font-weight="bold" letter-spacing="-0.6">1779.58</text>
<text x="2075" y="622" font-family="Liberation Sans" letter-spacing="1">会议室</text><text x="2075" y="630.5" font-family="Liberation Mono" font-size="7.2" font-weight="bold" letter-spacing="-0.6">4000.10</text>
<text x="1958" y="709.6" font-family="Liberation Sans" letter-spacing="1">消防电梯</text><text x="1958" y="718.1" font-family="Liberation Mono" font-size="7.2" font-weight="bold" letter-spacing="-0.6">4519.79</text>
<text x="2002" y="706" font-family="Liberation Sans" letter-spacing="1">走道</text><text x="2002" y="714.5" font-family="Liberation Mono" font-size="7.2" font-weight="bold" letter-spacing="-0.6">2641.06</text>
<text x="1932" y="745" font-family="Liberation Sans" letter-spacing="1">走道</text><text x="1932" y="753.5" font-family="Liberation Mono" font-size="7.2" font-weight="bold" letter-spacing="-0.6">2800.00</text>
<text x="2075" y="749.5" font-family="Liberation Sans" letter-spacing="1">会议室</text><text x="2075" y="758.0" font-family="Liberation Mono" font-size="7.2" font-weight="bold" letter-spacing="-0.6">4000.10</text>
<text x="1833" y="734.6" font-family="Liberation Sans" letter-spacing="1">女卫生间</text><text x="1833" y="743.1" font-family="Liberation Mono" font-size="7.2" font-weight="bold" letter-spacing="-0.6">3950.10</text>
<text x="1830" y="794" font-family="Liberation Sans" letter-spacing="1">空调管井</text><text x="1830" y="802.5" font-family="Liberation Mono" font-size="7.2" font-weight="bold" letter-spacing="-0.6">2997.50</text>
<text x="1808" y="829" font-family="Liberation Sans" letter-spacing="1">电梯</text><text x="1808" y="837.5" font-family="Liberation Mono" font-size="7.2" font-weight="bold" letter-spacing="-0.6">3730.10</text>
<text x="1868" y="818" font-family="Liberation Sans" letter-spacing="1">走道</text><text x="1868" y="826.5" font-family="Liberation Mono" font-size="7.2" font-weight="bold" letter-spacing="-0.6">2650.00</text>
<text x="2075" y="853" font-family="Liberation Sans" letter-spacing="1">空调机房</text><text x="2075" y="861.5" font-family="Liberation Mono" font-size="7.2" font-weight="bold" letter-spacing="-0.6">4000.10</text>
<text x="1893" y="875" font-family="Liberation Sans" letter-spacing="1">走道</text><text x="1893" y="883.5" font-family="Liberation Mono" font-size="7.2" font-weight="bold" letter-spacing="-0.6">2650.00</text>
<text x="1808" y="920.6" font-family="Liberation Sans" letter-spacing="1">电梯</text><text x="1808" y="929.1" font-family="Liberation Mono" font-size="7.2" font-weight="bold" letter-spacing="-0.6">4519.79</text>
<text x="1924" y="922" font-family="Liberation Sans" letter-spacing="1">储藏室</text><text x="1924" y="930.5" font-family="Liberation Mono" font-size="7.2" font-weight="bold" letter-spacing="-0.6">3265.00</text>
<text x="2016" y="920.6" font-family="Liberation Sans" letter-spacing="1">前室</text><text x="2016" y="929.1" font-family="Liberation Mono" font-size="7.2" font-weight="bold" letter-spacing="-0.6">3850.10</text>
<text x="2077" y="919" font-family="Liberation Sans" letter-spacing="1">疏散楼梯</text><text x="2077" y="927.5" font-family="Liberation Mono" font-size="7.2" font-weight="bold" letter-spacing="-0.6">3850.10</text>
<text x="1917" y="710" font-family="Liberation Sans" letter-spacing="1">消防</text><text x="1917" y="718.5" font-family="Liberation Mono" font-size="7.2" font-weight="bold" letter-spacing="-0.6">1747.50</text>
<text x="1905" y="782" font-family="Liberation Sans" letter-spacing="1">女卫生间</text><text x="1905" y="790.5" font-family="Liberation Mono" font-size="7.2" font-weight="bold" letter-spacing="-0.6">4519.79</text>
<text x="1950" y="792" font-family="Liberation Sans" letter-spacing="1">男卫生间</text><text x="1950" y="800.5" font-family="Liberation Mono" font-size="7.2" font-weight="bold" letter-spacing="-0.6">4519.79</text>
</g>
<g font-size="6.5" fill="#888" font-family="Liberation Mono" shape-rendering="auto">
<text x="1206" y="290" transform="rotate(-90 1206 290)" text-anchor="middle">11100</text>
<text x="2400.5" y="290" transform="rotate(-90 2400.5 290)" text-anchor="middle">11100</text>
<text x="1206" y="455" transform="rotate(-90 1206 455)" text-anchor="middle">2900</text>
<text x="2400.5" y="455" transform="rotate(-90 2400.5 455)" text-anchor="middle">2900</text>
<text x="1206" y="620" transform="rotate(-90 1206 620)" text-anchor="middle">8400</text>
<text x="2400.5" y="620" transform="rotate(-90 2400.5 620)" text-anchor="middle">8400</text>
<text x="1206" y="745" transform="rotate(-90 1206 745)" text-anchor="middle">8400</text>
<text x="2400.5" y="745" transform="rotate(-90 2400.5 745)" text-anchor="middle">8400</text>
<text x="1206" y="872" transform="rotate(-90 1206 872)" text-anchor="middle">8400</text>
<text x="2400.5" y="872" transform="rotate(-90 2400.5 872)" text-anchor="middle">8400</text>
<text x="1206" y="998" transform="rotate(-90 1206 998)" text-anchor="middle">8400</text>
<text x="2400.5" y="998" transform="rotate(-90 2400.5 998)" text-anchor="middle">8400</text>
<text x="1206" y="1122" transform="rotate(-90 1206 1122)" text-anchor="middle">8400</text>
<text x="2400.5" y="1122" transform="rotate(-90 2400.5 1122)" text-anchor="middle">8400</text>
<text x="1206" y="1280" transform="rotate(-90 1206 1280)" text-anchor="middle">12000</text>
<text x="2400.5" y="1280" transform="rotate(-90 2400.5 1280)" text-anchor="middle">12000</text>
<text x="1194" y="950" transform="rotate(-90 1194 950)" text-anchor="middle">67200</text><text x="2422" y="950" transform="rotate(-90 2422 950)" text-anchor="middle">67200</text>
</g>
<line x1="1303" y1="245" x2="1303" y2="1416" stroke="#ff1a1a" stroke-width="1" stroke-dasharray="30 3 1.5 3"/>
<line x1="1362" y1="245" x2="1362" y2="915" stroke="#ff1a1a" stroke-width="1" stroke-dasharray="30 3 1.5 3"/>
<line x1="1420" y1="245" x2="1420" y2="1416" stroke="#ff1a1a" stroke-width="1" stroke-dasharray="30 3 1.5 3"/>
<line x1="1474.5" y1="245" x2="1474.5" y2="915" stroke="#ff1a1a" stroke-width="1" stroke-dasharray="30 3 1.5 3"/>
<line x1="1536.5" y1="245" x2="1536.5" y2="1416" stroke="#ff1a1a" stroke-width="1" stroke-dasharray="30 3 1.5 3"/>
<line x1="1653.5" y1="245" x2="1653.5" y2="1416" stroke="#ff1a1a" stroke-width="1" stroke-dasharray="30 3 1.5 3"/>
<line x1="1769" y1="245" x2="1769" y2="1416" stroke="#ff1a1a" stroke-width="1" stroke-dasharray="30 3 1.5 3"/>
<line x1="1886.5" y1="245" x2="1886.5" y2="1416" stroke="#ff1a1a" stroke-width="1" stroke-dasharray="30 3 1.5 3"/>
<line x1="2002.5" y1="245" x2="2002.5" y2="1416" stroke="#ff1a1a" stroke-width="1" stroke-dasharray="30 3 1.5 3"/>
<line x1="2119.5" y1="245" x2="2119.5" y2="1416" stroke="#ff1a1a" stroke-width="1" stroke-dasharray="30 3 1.5 3"/>
<line x1="2244.5" y1="245" x2="2244.5" y2="1416" stroke="#ff1a1a" stroke-width="1" stroke-dasharray="30 3 1.5 3"/>
<line x1="2352.5" y1="245" x2="2352.5" y2="1416" stroke="#ff1a1a" stroke-width="1" stroke-dasharray="30 3 1.5 3"/>
<circle cx="1169" cy="329" r="5.8" fill="#fff" stroke="#22e022" stroke-width="1.1" shape-rendering="auto"/>
<text x="1169" y="332.3" font-size="7" text-anchor="middle" font-family="Liberation Serif" font-weight="bold" fill="#000" shape-rendering="auto">E-1</text>
<circle cx="2432.5" cy="329" r="5.8" fill="#fff" stroke="#22e022" stroke-width="1.1" shape-rendering="auto"/>
<text x="2432.5" y="332.3" font-size="7" text-anchor="middle" font-family="Liberation Serif" font-weight="bold" fill="#000" shape-rendering="auto">E-1</text>
<circle cx="1174" cy="371" r="5.8" fill="#fff" stroke="#22e022" stroke-width="1.1" shape-rendering="auto"/>
<text x="1174" y="374.3" font-size="9.5" text-anchor="middle" font-family="Liberation Serif" font-weight="bold" fill="#000" shape-rendering="auto">K</text>
<circle cx="2432.5" cy="371" r="5.8" fill="#fff" stroke="#22e022" stroke-width="1.1" shape-rendering="auto"/>
<text x="2432.5" y="374.3" font-size="9.5" text-anchor="middle" font-family="Liberation Serif" font-weight="bold" fill="#000" shape-rendering="auto">K</text>
<circle cx="1168.5" cy="434" r="5.8" fill="#fff" stroke="#22e022" stroke-width="1.1" shape-rendering="auto"/>
<text x="1168.5" y="437.3" font-size="7" text-anchor="middle" font-family="Liberation Serif" font-weight="bold" fill="#000" shape-rendering="auto">F-1</text>
<circle cx="2432.5" cy="434" r="5.8" fill="#fff" stroke="#22e022" stroke-width="1.1" shape-rendering="auto"/>
<text x="2432.5" y="437.3" font-size="7" text-anchor="middle" font-family="Liberation Serif" font-weight="bold" fill="#000" shape-rendering="auto">F-1</text>
<circle cx="1174" cy="559" r="5.8" fill="#fff" stroke="#22e022" stroke-width="1.1" shape-rendering="auto"/>
<text x="1174" y="562.3" font-size="9.5" text-anchor="middle" font-family="Liberation Serif" font-weight="bold" fill="#000" shape-rendering="auto">J</text>
<circle cx="2432.5" cy="559" r="5.8" fill="#fff" stroke="#22e022" stroke-width="1.1" shape-rendering="auto"/>
<text x="2432.5" y="562.3" font-size="9.5" text-anchor="middle" font-family="Liberation Serif" font-weight="bold" fill="#000" shape-rendering="auto">J</text>
<circle cx="1174" cy="684" r="5.8" fill="#fff" stroke="#22e022" stroke-width="1.1" shape-rendering="auto"/>
<text x="1174" y="687.3" font-size="9.5" text-anchor="middle" font-family="Liberation Serif" font-weight="bold" fill="#000" shape-rendering="auto">H</text>
<circle cx="2432.5" cy="684" r="5.8" fill="#fff" stroke="#22e022" stroke-width="1.1" shape-rendering="auto"/>
<text x="2432.5" y="687.3" font-size="9.5" text-anchor="middle" font-family="Liberation Serif" font-weight="bold" fill="#000" shape-rendering="auto">H</text>
<circle cx="1169" cy="810" r="5.8" fill="#fff" stroke="#22e022" stroke-width="1.1" shape-rendering="auto"/>
<text x="1169" y="813.3" font-size="9.5" text-anchor="middle" font-family="Liberation Serif" font-weight="bold" fill="#000" shape-rendering="auto">G</text>
<circle cx="2432.5" cy="810" r="5.8" fill="#fff" stroke="#22e022" stroke-width="1.1" shape-rendering="auto"/>
<text x="2432.5" y="813.3" font-size="9.5" text-anchor="middle" font-family="Liberation Serif" font-weight="bold" fill="#000" shape-rendering="auto">G</text>
<circle cx="1174" cy="935" r="5.8" fill="#fff" stroke="#22e022" stroke-width="1.1" shape-rendering="auto"/>
<text x="1174" y="938.3" font-size="9.5" text-anchor="middle" font-family="Liberation Serif" font-weight="bold" fill="#000" shape-rendering="auto">F</text>
<circle cx="2432.5" cy="935" r="5.8" fill="#fff" stroke="#22e022" stroke-width="1.1" shape-rendering="auto"/>
<text x="2432.5" y="938.3" font-size="9.5" text-anchor="middle" font-family="Liberation Serif" font-weight="bold" fill="#000" shape-rendering="auto">F</text>
<circle cx="1174" cy="1061" r="5.8" fill="#fff" stroke="#22e022" stroke-width="1.1" shape-rendering="auto"/>
<text x="1174" y="1064.3" font-size="9.5" text-anchor="middle" font-family="Liberation Serif" font-weight="bold" fill="#000" shape-rendering="auto">E</text>
<circle cx="2432.5" cy="1061" r="5.8" fill="#fff" stroke="#22e022" stroke-width="1.1" shape-rendering="auto"/>
<text x="2432.5" y="1064.3" font-size="9.5" text-anchor="middle" font-family="Liberation Serif" font-weight="bold" fill="#000" shape-rendering="auto">E</text>
<circle cx="1174" cy="1186" r="5.8" fill="#fff" stroke="#22e022" stroke-width="1.1" shape-rendering="auto"/>
<text x="1174" y="1189.3" font-size="9.5" text-anchor="middle" font-family="Liberation Serif" font-weight="bold" fill="#000" shape-rendering="auto">D</text>
<circle cx="2432.5" cy="1186" r="5.8" fill="#fff" stroke="#22e022" stroke-width="1.1" shape-rendering="auto"/>
<text x="2432.5" y="1189.3" font-size="9.5" text-anchor="middle" font-family="Liberation Serif" font-weight="bold" fill="#000" shape-rendering="auto">D</text>
<circle cx="1174" cy="1374" r="5.8" fill="#fff" stroke="#22e022" stroke-width="1.1" shape-rendering="auto"/>
<text x="1174" y="1377.3" font-size="9.5" text-anchor="middle" font-family="Liberation Serif" font-weight="bold" fill="#000" shape-rendering="auto">C</text>
<circle cx="2432.5" cy="1374" r="5.8" fill="#fff" stroke="#22e022" stroke-width="1.1" shape-rendering="auto"/>
<text x="2432.5" y="1377.3" font-size="9.5" text-anchor="middle" font-family="Liberation Serif" font-weight="bold" fill="#000" shape-rendering="auto">C</text>
<path d="M1303.5 1317v46" stroke="#2aa89a" stroke-width="1.5"/><path d="M1303.5 1362.5h46" stroke="#e02020" stroke-width="2"/>
<g stroke="#777" stroke-width="1.6" fill="none"><path d="M1298 1296l5.5 6 5.5-6M1303.5 1302v7"/><path d="M1297 1357h12l-12 11h12"/><path d="M1357 1358l10 9M1367 1358l-10 9"/></g>
<rect x="2364" y="356" width="89" height="89" fill="#dedede"/><polygon points="2380,356 2437,356 2453,372 2453,429 2437,445 2380,445 2364,429 2364,372" fill="#e8e8e8"/>
<path d="M2406.7 383v33.5M2406.7 395.8h17M2390 416.8h38" stroke="#8a8a8a" stroke-width="1.8"/>
<rect x="988.5" y="332.5" width="31" height="12.5" rx="1" fill="#ff2a2a" stroke="#f01010" stroke-width="1.2"/>
<text x="1024" y="342.0" font-size="7.5" font-family="Liberation Mono" letter-spacing="-0.4" fill="#111" shape-rendering="auto">1747.50</text>
<rect x="988.5" y="347.4" width="31" height="12.5" rx="1" fill="#ff2a2a" stroke="#f01010" stroke-width="1.2"/>
<text x="1024" y="356.9" font-size="7.5" font-family="Liberation Mono" letter-spacing="-0.4" fill="#111" shape-rendering="auto">1779.88</text>
<rect x="988.5" y="362.4" width="31" height="12.5" rx="1" fill="#ff2a2a" stroke="#f01010" stroke-width="1.2"/>
<text x="1024" y="371.9" font-size="7.5" font-family="Liberation Mono" letter-spacing="-0.4" fill="#111" shape-rendering="auto">1892.50</text>
<rect x="988.5" y="377.4" width="31" height="12.5" rx="1" fill="#ff96ff" stroke="#f080f0" stroke-width="1.2"/>
<text x="1024" y="386.9" font-size="7.5" font-family="Liberation Mono" letter-spacing="-0.4" fill="#111" shape-rendering="auto">2047.50</text>
<rect x="988.5" y="392.3" width="31" height="12.5" rx="1" fill="#2e9a2e" stroke="#1a6a1a" stroke-width="1.2"/>
<text x="1024" y="401.8" font-size="7.5" font-family="Liberation Mono" letter-spacing="-0.4" fill="#111" shape-rendering="auto">2565.00</text>
<rect x="988.5" y="407.2" width="31" height="12.5" rx="1" fill="#2affff" stroke="#18f0f0" stroke-width="1.2"/>
<text x="1024" y="416.8" font-size="7.5" font-family="Liberation Mono" letter-spacing="-0.4" fill="#111" shape-rendering="auto">2641.06</text>
<rect x="988.5" y="422.2" width="31" height="12.5" rx="1" fill="#2affff" stroke="#18f0f0" stroke-width="1.2"/>
<text x="1024" y="431.7" font-size="7.5" font-family="Liberation Mono" letter-spacing="-0.4" fill="#111" shape-rendering="auto">2650.00</text>
<rect x="988.5" y="437.1" width="31" height="12.5" rx="1" fill="#2affff" stroke="#18f0f0" stroke-width="1.2"/>
<text x="1024" y="446.6" font-size="7.5" font-family="Liberation Mono" letter-spacing="-0.4" fill="#111" shape-rendering="auto">2800.00</text>
<rect x="988.5" y="452.1" width="31" height="12.5" rx="1" fill="#2a2acc" stroke="#0a0ab4" stroke-width="1.2"/>
<text x="1024" y="461.6" font-size="7.5" font-family="Liberation Mono" letter-spacing="-0.4" fill="#111" shape-rendering="auto">2997.50</text>
<rect x="988.5" y="467.0" width="31" height="12.5" rx="1" fill="#2a2acc" stroke="#0a0ab4" stroke-width="1.2"/>
<text x="1024" y="476.5" font-size="7.5" font-family="Liberation Mono" letter-spacing="-0.4" fill="#111" shape-rendering="auto">3125.00</text>
<rect x="988.5" y="482.0" width="31" height="12.5" rx="1" fill="#2a2acc" stroke="#0a0ab4" stroke-width="1.2"/>
<text x="1024" y="491.5" font-size="7.5" font-family="Liberation Mono" letter-spacing="-0.4" fill="#111" shape-rendering="auto">3138.27</text>
<rect x="988.5" y="496.9" width="31" height="12.5" rx="1" fill="#2aff2a" stroke="#14f014" stroke-width="1.2"/>
<text x="1024" y="506.4" font-size="7.5" font-family="Liberation Mono" letter-spacing="-0.4" fill="#111" shape-rendering="auto">3260.00</text>
<rect x="988.5" y="511.9" width="31" height="12.5" rx="1" fill="#2aff2a" stroke="#14f014" stroke-width="1.2"/>
<text x="1024" y="521.4" font-size="7.5" font-family="Liberation Mono" letter-spacing="-0.4" fill="#111" shape-rendering="auto">3265.00</text>
<rect x="988.5" y="526.9" width="31" height="12.5" rx="1" fill="#2aff2a" stroke="#14f014" stroke-width="1.2"/>
<text x="1024" y="536.4" font-size="7.5" font-family="Liberation Mono" letter-spacing="-0.4" fill="#111" shape-rendering="auto">3348.50</text>
<rect x="988.5" y="541.8" width="31" height="12.5" rx="1" fill="#2aff2a" stroke="#14f014" stroke-width="1.2"/>
<text x="1024" y="551.3" font-size="7.5" font-family="Liberation Mono" letter-spacing="-0.4" fill="#111" shape-rendering="auto">3450.10</text>
<rect x="988.5" y="556.8" width="31" height="12.5" rx="1" fill="#b84c54" stroke="#8e1f27" stroke-width="1.2"/>
<text x="1024" y="566.2" font-size="7.5" font-family="Liberation Mono" letter-spacing="-0.4" fill="#111" shape-rendering="auto">3500.10</text>
<rect x="988.5" y="571.7" width="31" height="12.5" rx="1" fill="#b84c54" stroke="#8e1f27" stroke-width="1.2"/>
<text x="1024" y="581.2" font-size="7.5" font-family="Liberation Mono" letter-spacing="-0.4" fill="#111" shape-rendering="auto">3510.00</text>
<rect x="988.5" y="586.6" width="31" height="12.5" rx="1" fill="#b84c54" stroke="#8e1f27" stroke-width="1.2"/>
<text x="1024" y="596.1" font-size="7.5" font-family="Liberation Mono" letter-spacing="-0.4" fill="#111" shape-rendering="auto">3560.00</text>
<rect x="988.5" y="601.6" width="31" height="12.5" rx="1" fill="#b84c54" stroke="#8e1f27" stroke-width="1.2"/>
<text x="1024" y="611.1" font-size="7.5" font-family="Liberation Mono" letter-spacing="-0.4" fill="#111" shape-rendering="auto">3750.10</text>
<rect x="988.5" y="616.5" width="31" height="12.5" rx="1" fill="#9696ff" stroke="#8585f2" stroke-width="1.2"/>
<text x="1024" y="626.0" font-size="7.5" font-family="Liberation Mono" letter-spacing="-0.4" fill="#111" shape-rendering="auto">3850.10</text>
<rect x="988.5" y="631.5" width="31" height="12.5" rx="1" fill="#9696ff" stroke="#8585f2" stroke-width="1.2"/>
<text x="1024" y="641.0" font-size="7.5" font-family="Liberation Mono" letter-spacing="-0.4" fill="#111" shape-rendering="auto">3950.10</text>
<rect x="988.5" y="646.5" width="31" height="12.5" rx="1" fill="#9696ff" stroke="#8585f2" stroke-width="1.2"/>
<text x="1024" y="656.0" font-size="7.5" font-family="Liberation Mono" letter-spacing="-0.4" fill="#111" shape-rendering="auto">4000.10</text>
<rect x="988.5" y="661.4" width="31" height="12.5" rx="1" fill="#9696ff" stroke="#8585f2" stroke-width="1.2"/>
<text x="1024" y="670.9" font-size="7.5" font-family="Liberation Mono" letter-spacing="-0.4" fill="#111" shape-rendering="auto">4050.00</text>
<rect x="988.5" y="676.3" width="31" height="12.5" rx="1" fill="#9696ff" stroke="#8585f2" stroke-width="1.2"/>
<text x="1024" y="685.8" font-size="7.5" font-family="Liberation Mono" letter-spacing="-0.4" fill="#111" shape-rendering="auto">4050.10</text>
<rect x="988.5" y="691.3" width="31" height="12.5" rx="1" fill="#b4b4b4" stroke="#828282" stroke-width="1.2"/>
<text x="1024" y="700.8" font-size="7.5" font-family="Liberation Mono" letter-spacing="-0.4" fill="#111" shape-rendering="auto">4134.00</text>
<rect x="988.5" y="706.2" width="31" height="12.5" rx="1" fill="#b4b4b4" stroke="#828282" stroke-width="1.2"/>
<text x="1024" y="715.8" font-size="7.5" font-family="Liberation Mono" letter-spacing="-0.4" fill="#111" shape-rendering="auto">4150.10</text>
<rect x="988.5" y="721.2" width="31" height="12.5" rx="1" fill="#5a2b28" stroke="#360a08" stroke-width="1.2"/>
<text x="1024" y="730.7" font-size="7.5" font-family="Liberation Mono" letter-spacing="-0.4" fill="#111" shape-rendering="auto">4519.79</text>
</svg></div>
<div class="abs" style="left:2557px;top:245px;width:3px;height:1171px;background:#e2e2e2"></div>
<div class="abs" style="left:563px;top:1416px;width:1997px;height:52px;background:#e4e4e4;border-top:2px solid #d2d2d2"></div>
<div class="abs" style="left:563px;top:1418px;width:1121px;height:49px;background:#fff;border-radius:0 0 4px 0"></div>
<div class="abs" style="left:575px;top:1422px;width:1045px;height:39px;background:#fcfcfc"></div>
<div class="abs" style="left:1629px;top:1423px;width:1px;height:37px;background:#d0d0d0"></div>
<svg class="abs" style="left:563px;top:1418px" width="1121" height="49"><g fill="#888"><rect x="3" y="17" width="2" height="2"/><rect x="3" y="21" width="2" height="2"/><rect x="3" y="25" width="2" height="2"/><rect x="3" y="29" width="2" height="2"/></g><path d="M1089 26l7-6 7 6" fill="none" stroke="#444" stroke-width="2.2"/></svg>
<div id="status" class="abs">
<svg class="abs" style="left:0;top:0" width="900" height="48" viewBox="0 1469.5 900 48">
<g fill="none" stroke="#404040" stroke-width="2">
<path d="M14 1475h11v3h10v-3h5v27H14z"/><path d="M26 1475v-1"/>
<path d="M60 1474h6M60 1474v4M87 1474h-6M87 1474v4M60 1502h6M60 1502v-4M87 1502h-6M87 1502v-4"/><rect x="65" y="1479" width="6" height="18"/><rect x="76" y="1479" width="6" height="18"/>
<path d="M105 1474h28v10M105 1474v27h10"/><path d="M105 1479h28" stroke-width="1.5" stroke-dasharray="2 1.5"/><path d="M121 1494h12M127 1488v13"/>
<path d="M164 1474h6M164 1474v5M191 1474h-6M191 1474v5M164 1502h6M164 1502v-5M191 1502h-6M191 1502v-5"/>
<path d="M177.5 1478v20M167.5 1488h20" stroke-width="3"/><path d="M174 1481l3.5-4 3.5 4M174 1495l3.5 4 3.5-4M171 1484.5l-4 3.5 4 3.5M184 1484.5l4 3.5-4 3.5" stroke-width="2"/>
<path d="M216 1500q-6-4-6-10l2-3 3 1 1 4v-13a2 2 0 0 1 4 0v9v-11a2 2 0 0 1 4 0v11v-10a2 2 0 0 1 4 0v10v-8a2 2 0 0 1 4 0v12q0 8-6 11z"/>
<path d="M260 1488q-3-6 6-8q9-1 11 3q6 4-1 8q-6 4-11 1"/><path d="M268 1475q-4 6 1 13q5 7 2 13"/>
<circle cx="312" cy="1484" r="9"/><path d="M319 1491l9 10" stroke-width="2.4"/>
</g>
<g fill="#3a9a86"><circle cx="312" cy="1479" r="1.2"/><circle cx="312" cy="1489" r="1.2"/><circle cx="307" cy="1484" r="1.2"/><circle cx="317" cy="1484" r="1.2"/></g>
<circle cx="268" cy="1488" r="2.5" fill="#404040"/>
<path d="M150 1474v28M347 1474v28M636.5 1474v28" stroke="#c8c8c8" stroke-width="1.2"/>
<g fill="none" stroke="#404040" stroke-width="2"><path d="M361 1480h22v21h-22z M361 1480l6-6h22v21l-6 6 M383 1480l6-6"/></g>
<g fill="none" stroke="#404040" stroke-width="2"><path d="M407 1480h22v21h-22z M407 1480l6-6h22v21l-6 6 M429 1480l6-6 M413 1474v21h22 M407 1501l6-6"/></g>
<path d="M453 1480h22v21h-22z" fill="#bdbdbd" stroke="#404040" stroke-width="2"/><path d="M475 1480l6-6v21l-6 6z" fill="#5a5a5a" stroke="#404040" stroke-width="1.5"/><path d="M453 1480l6-6h22l-6 6z" fill="#fff" stroke="#404040" stroke-width="1.5"/>
<rect x="497.5" y="1473.5" width="34" height="35" fill="#c2ddd7" stroke="#2e8a78" stroke-width="1.6"/>
<path d="M500 1484h21v20h-21z" fill="#b9b9b9"/><path d="M521 1484l7-7v20l-7 7z" fill="#5f5f5f"/><path d="M500 1484l7-7h21l-7 7z" fill="#f2f2f2"/>
<path d="M545 1484h21v20h-21z" fill="#bfbfbf"/><path d="M566 1484l7-7v20l-7 7z" fill="#6a6a6a"/><path d="M545 1484l7-7h21l-7 7z" fill="#fafafa"/>
<path d="M597 1486l7-7 7 7M597 1494l7-7 7 7" fill="none" stroke="#4a4a4a" stroke-width="2.6"/>
<path d="M657 1487.5h14" stroke="#999" stroke-width="1.8"/><path d="M690 1487h105" stroke="#999" stroke-width="1.3"/>
<rect x="746.5" y="1473" width="6" height="28" fill="#f3f3f3" stroke="#999" stroke-width="1"/>
<path d="M813 1487.5h14M820 1480.5v14" stroke="#999" stroke-width="1.8"/>
</svg>
<div class="abs" style="left:1527px;top:4px;font-size:21px;line-height:26px;color:#222;white-space:nowrap">-3717.86 , 75145.10 , 0.00</div>
<svg class="abs" style="left:2200px;top:0" width="360" height="48" viewBox="2200 1469 360 48">
<rect x="2224.5" y="1474.5" width="35" height="34" fill="#c2ddd7" stroke="#5aa294" stroke-width="1"/>
<path d="M2233 1484h20v20h-20zM2228 1479h8v8h-8z" fill="none" stroke="#404040" stroke-width="2"/><polygon points="2262,1490 2270,1490 2266,1495" fill="#333"/>
<rect x="2279.5" y="1474.5" width="35" height="34" fill="#c2ddd7" stroke="#5aa294" stroke-width="1"/>
<path d="M2283 1505h28M2284 1504l26-25" fill="none" stroke="#404040" stroke-width="1.8"/><circle cx="2297" cy="1492" r="3" fill="#404040"/>
<rect x="2326.5" y="1474.5" width="34" height="34" fill="#c2ddd7" stroke="#5aa294" stroke-width="1"/>
<path d="M2333 1478l10 22M2343 1500h14" fill="none" stroke="#404040" stroke-width="1.8"/><path d="M2339 1493q7 1 8 7" fill="none" stroke="#404040" stroke-width="1.2" stroke-dasharray="1.5 1.5"/>
<path d="M2376 1476v29h28" fill="none" stroke="#404040" stroke-width="2.2"/>
<path d="M2422 1477h28v28h-28zM2431.5 1477v28M2441 1477v28M2422 1486.5h28M2422 1496h28" fill="none" stroke="#404040" stroke-width="2"/>
<path d="M2468 1491l8-8 8 8-8 8zM2476 1476l-4 4h8zM2476 1506l-4-4h8zM2462 1491l5-4v8zM2490 1491l-5-4v8z" fill="none" stroke="#404040" stroke-width="2"/><rect x="2473" y="1488" width="6" height="6" fill="none" stroke="#404040" stroke-width="1.6"/>
<polygon points="2536.0,1488.8 2539.9,1489.2 2539.9,1492.8 2536.0,1493.2 2535.0,1495.8 2537.4,1498.8 2534.8,1501.4 2531.8,1499.0 2529.2,1500.0 2528.8,1503.9 2525.2,1503.9 2524.8,1500.0 2522.2,1499.0 2519.2,1501.4 2516.6,1498.8 2519.0,1495.8 2518.0,1493.2 2514.1,1492.8 2514.1,1489.2 2518.0,1488.8 2519.0,1486.2 2516.6,1483.2 2519.2,1480.6 2522.2,1483.0 2524.8,1482.0 2525.2,1478.1 2528.8,1478.1 2529.2,1482.0 2531.8,1483.0 2534.8,1480.6 2537.4,1483.2 2535.0,1486.2" fill="none" stroke="#404040" stroke-width="1.8" stroke-linejoin="round"/><circle cx="2527" cy="1491" r="4.5" fill="none" stroke="#404040" stroke-width="1.8"/>
</svg>
</div>
</body></html>
